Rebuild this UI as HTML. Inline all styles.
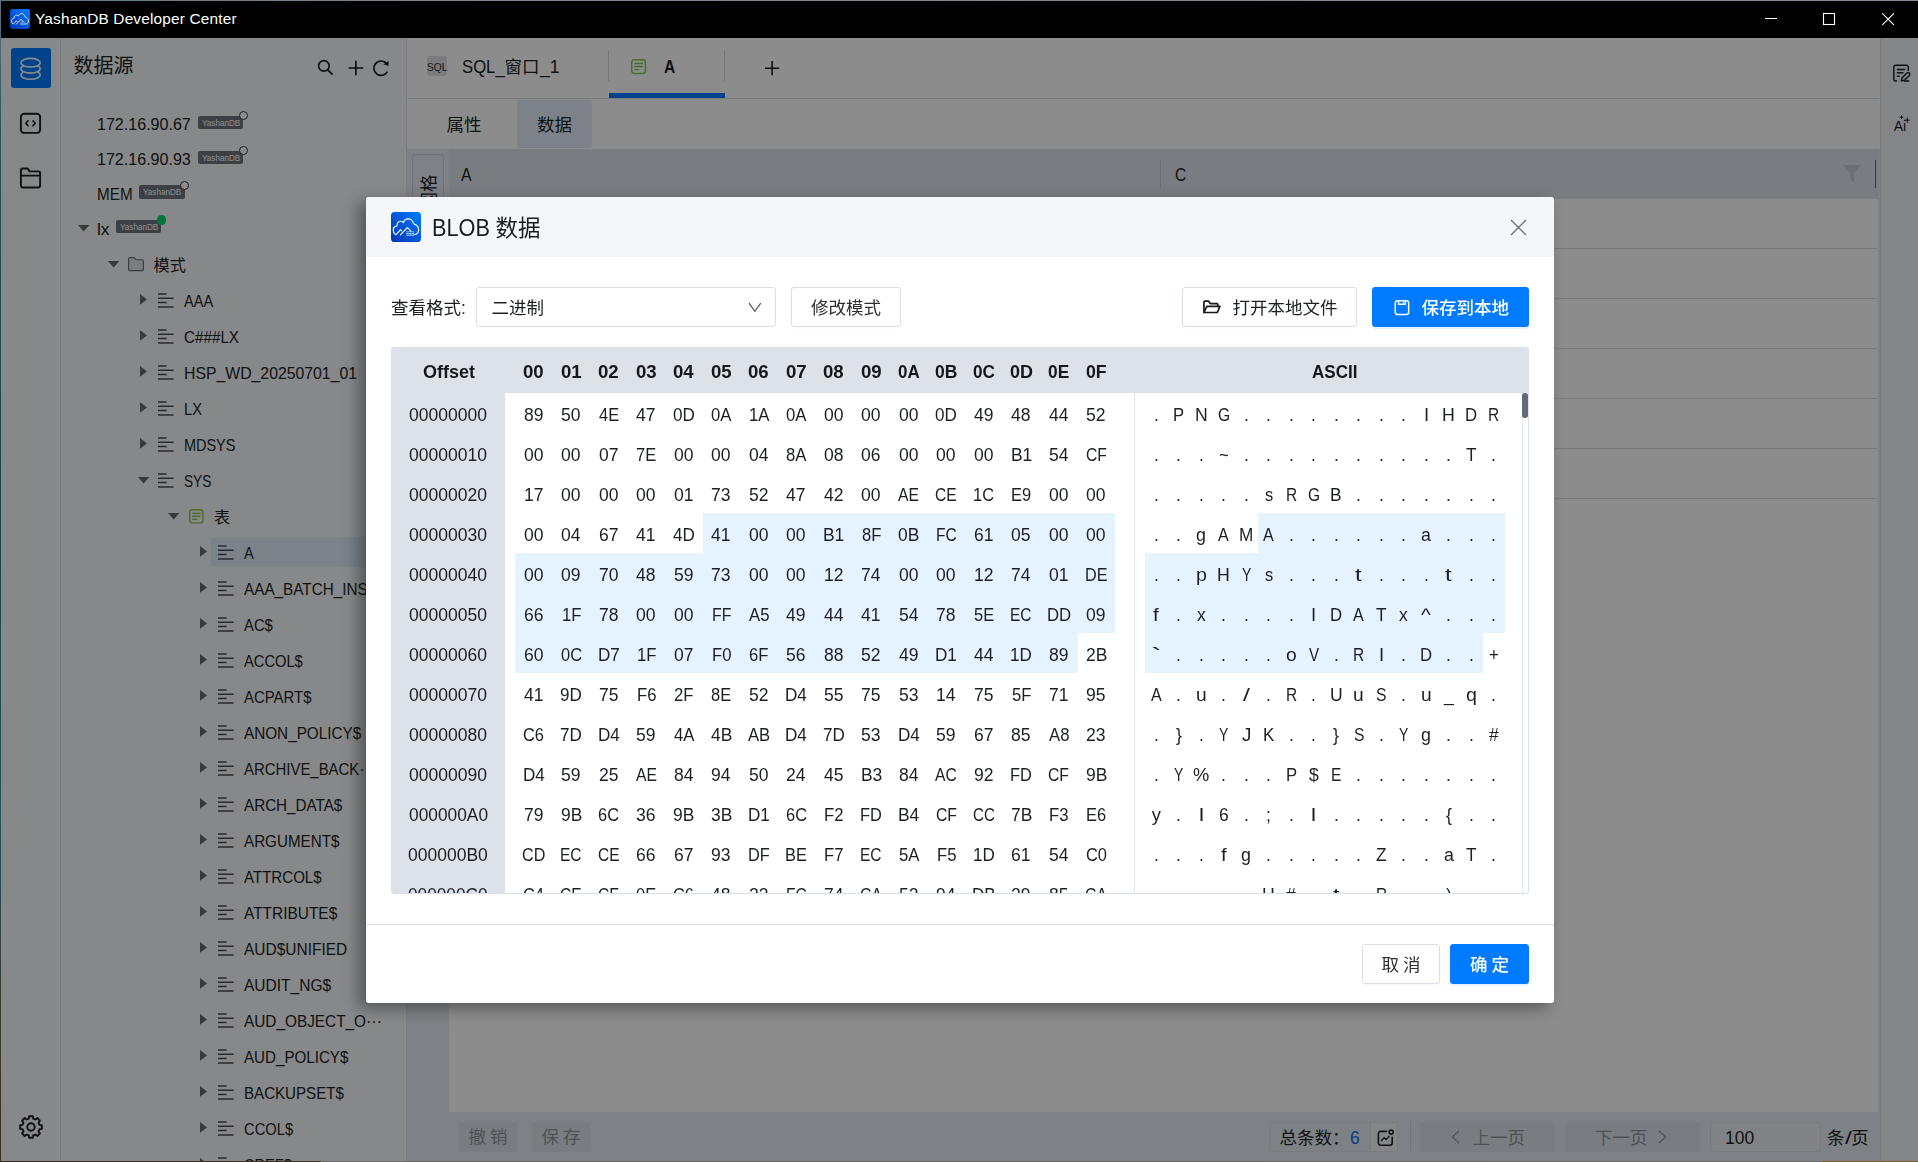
<!DOCTYPE html>
<html lang="zh-CN"><head><meta charset="utf-8"><title>YashanDB Developer Center</title>
<style>
*{box-sizing:border-box;margin:0;padding:0}
html,body{width:1918px;height:1162px;overflow:hidden}
body{position:relative;background:linear-gradient(90deg,#33291f 0,#3d3226 320px,#696969 321px,#6b6b6b 1822px,#78591f 1823px,#7a5a20 100%);font-family:"Liberation Sans","Noto Sans CJK SC",sans-serif;color:#303133;font-size:16px}
.abs{position:absolute}
svg{position:absolute;overflow:visible}
.t{position:absolute;white-space:pre}
.c{text-align:center}
.l{display:inline-block;transform-origin:0 50%}
#topline{left:0;top:0;width:1918px;height:1px;background:linear-gradient(90deg,#5c7483 0,#7b848c 400px,#80868d 100%)}
#leftline{left:0;top:0;width:1px;height:1162px;background:linear-gradient(#5c7483 0,#2a505c 12%,#18434d 45%,#1f5560 70%,#3a3a2c 88%,#3a3020 100%)}
#titlebar{left:1px;top:1px;width:1917px;height:37px;background:#000}
#tb-title{left:35px;top:0.3px;height:37px;line-height:37px;color:#fff;font-size:15.4px;letter-spacing:.18px}
#app{left:1px;top:38px;width:1917px;height:1123px;background:#fff;overflow:hidden}
#mask{left:1px;top:38px;width:1917px;height:1123px;background:rgba(0,0,0,.45)}
/* coordinates inside #app are page coords minus (1,38) -> use inner wrapper shifted */
#appin{position:absolute;left:-1px;top:-38px;width:1918px;height:1162px}
#iconbar{left:1px;top:38px;width:60px;height:1124px;background:#f5f7fa;border-right:1px solid #dfe2e7}
#tree{left:61px;top:38px;width:346px;height:1124px;background:#f5f7fa;border-right:1px solid #dde0e5;overflow:hidden}
#treein{position:absolute;left:-61px;top:-38px;width:600px;height:1162px}
#rightbar{left:1880px;top:38px;width:38px;height:1124px;background:#f0f2f5;border-left:1px solid #d9dce1}
#tabbar{left:407px;top:38px;width:1472px;height:61px;background:#fff;border-bottom:1px solid #dcdee3}
#panel{left:407px;top:149px;width:1473px;height:1013px;background:#e5ecf3}
#thead{left:449px;top:149px;width:1429.5px;height:50px;background:#dce2e9}
#tbody{left:449px;top:199px;width:1428.5px;height:913px;background:#fff}
.rowline{position:absolute;left:449px;width:1428px;height:1px;background:#d9dbdf}
.tr{position:absolute;height:36px;line-height:36px;font-size:16.1px;color:#303133;white-space:nowrap}
.badge{position:absolute;height:13.4px;line-height:15.6px;overflow:hidden;width:45.6px;border-radius:2px;background:#6e757d;color:#fff;font-size:8.3px;text-align:center;white-space:pre}
.dot{position:absolute;width:9px;height:9px;border-radius:50%;border:1.3px solid #3a3d42;background:#fff}
.dot.on{border:none;background:#00d86b;width:9.4px;height:9.4px}
.btn-d{position:absolute;word-spacing:-1px;height:30px;line-height:31.6px;border-radius:3px;text-align:center;font-size:17.5px;color:#90959c;background:#dce3eb}
/* modal */
#modal{will-change:transform;left:366px;top:197px;width:1188px;height:806px;background:#fff;border-radius:3px;box-shadow:-7px 5px 16px rgba(0,0,0,.38);overflow:hidden}
#min{position:absolute;left:-366px;top:-197px;width:1918px;height:1162px}
#mhead{left:366px;top:197px;width:1188px;height:60px;background:#f5f6fa}
#mtitle{left:431.5px;top:197px;height:60px;line-height:60px;font-size:22.5px;color:#1f2329}
.btn{position:absolute;word-spacing:-1px;box-shadow:0 2px 0 rgba(0,0,0,.016);height:40px;line-height:40px;border:1px solid #d9dfe7;border-radius:3px;background:#fff;font-size:17.5px;color:#303133;text-align:center;white-space:nowrap}
.btn.pri{background:#007bff;border-color:#007bff;color:#fff;box-shadow:0 2px 0 rgba(5,125,255,.1)}
#hex{left:391px;top:347px;width:1137.5px;height:546.5px;overflow:hidden;border-bottom:1px solid #d9dfe7;border-right:1px solid #dde2e9;border-radius:3px}
#hexin{position:absolute;left:-391px;top:-347px;width:1918px;height:1162px}
.hh{position:absolute;top:347px;height:46px;line-height:48px;font-weight:bold;font-size:17.6px;color:#1f2329;text-align:center}
.hc{position:absolute;height:40px;line-height:43px;font-size:17.6px;color:#303133;text-align:center}
.sel{position:absolute;background:#e5f2ff}

</style></head>
<body>
<div class="abs" id="leftline"></div>
<div class="abs" id="topline"></div>
<div class="abs" id="titlebar"></div>
<svg style="left:10px;top:9px" width="20" height="20" viewBox="0 0 30 30">
<defs><linearGradient id="lg1" x1="1" y1="0" x2="0" y2="1"><stop offset="0" stop-color="#007cff"/><stop offset="1" stop-color="#0036b4"/></linearGradient></defs>
<rect x="0" y="0" width="30" height="30" rx="3.6" fill="url(#lg1)"/>
<path d="M10.5 18.8 L9.5 17.6 L5.3 22.4 C4.9 22.8 4.5 22.6 4.2 22.400 C3 21.500 2.2 19.9 2.2 17.8 C2.2 15.8 3.8 14.4 6 13.9 C6 11.2 7.6 9.3 9.8 9.3 C10.8 9.3 11.6 9.9 12.2 10.7 C13.2 8.4 15 6.9 17 6.9 C19.8 6.9 22.2 8.9 22.5 11.7 C25.4 12.6 27.7 15 27.7 18 C27.7 20.4 26.2 22 23.6 22.7" fill="none" stroke="#fff" stroke-width="1.25" stroke-linecap="round" stroke-linejoin="round"/>
<path d="M9.3 22.9 L16.5 15.5 L19.9 19.2" fill="none" stroke="#fff" stroke-width="1.25" stroke-linecap="round" stroke-linejoin="round"/>
<path d="M15.2 19.8 H23.2" stroke="#fff" stroke-opacity=".8" stroke-width=".7"/><path d="M15.4 21.6 H23.2" stroke="#fff" stroke-opacity=".75" stroke-width="1.1" stroke-dasharray="2.2 .5"/><path d="M15.2 23.3 H23" stroke="#fff" stroke-opacity=".7" stroke-width=".9"/>
</svg>
<div class="t" id="tb-title">YashanDB Developer Center</div>
<svg style="left:1750px;top:1px" width="168" height="37" viewBox="1750 1 168 37">
<path d="M1765 18.5 H1777" stroke="#fff" stroke-width="1" fill="none"/>
<rect x="1823.5" y="13.5" width="11" height="11" stroke="#fff" stroke-width="1.1" fill="none"/>
<path d="M1882.3 13.3 L1893.9 24.9 M1893.9 13.3 L1882.3 24.9" stroke="#fff" stroke-width="1.15" fill="none"/>
</svg>
<div class="abs" id="app"><div id="appin">
<div class="abs" id="iconbar"></div>
<div class="abs" style="left:11px;top:48px;width:40px;height:40px;border-radius:3px;background:#007bff"></div>
<svg style="left:11px;top:48px" width="40" height="40" viewBox="0 0 40 40" fill="#007bff" stroke="#fff" stroke-width="1.6">
<ellipse cx="19.6" cy="26.9" rx="9.7" ry="4.3"/>
<ellipse cx="19.6" cy="20.8" rx="9.7" ry="4.3"/>
<ellipse cx="19.6" cy="14.7" rx="9.7" ry="4.3"/>
</svg>
<svg style="left:19px;top:112px" width="23" height="23" viewBox="0 0 23 23" fill="none" stroke="#1c1e22" stroke-width="1.9" stroke-linecap="round" stroke-linejoin="round">
<rect x="1.9" y="1.7" width="19.2" height="19.2" rx="3.2"/>
<path d="M9 8.8 L6.8 11.3 L9 13.8 M14 8.8 L16.2 11.3 L14 13.8" stroke-width="1.6"/>
</svg>
<svg style="left:19px;top:166px" width="23" height="24" viewBox="0 0 23 24" fill="none" stroke="#1c1e22" stroke-width="1.9" stroke-linecap="round" stroke-linejoin="round">
<path d="M1.9 7.2 V4.4 C1.9 3.3 2.7 2.5 3.8 2.5 H8.6 L10.6 5.4 H19.2 C20.3 5.4 21.1 6.2 21.1 7.3 V19.6 C21.1 20.700 20.3 21.5 19.2 21.5 H3.8 C2.7 21.5 1.9 20.700 1.9 19.6 Z"/>
<path d="M1.9 9.6 H21.1"/>
</svg>
<svg style="left:17px;top:1113px" width="28" height="28" viewBox="0 0 28 28" fill="none" stroke="#1c1e22" stroke-width="1.9" stroke-linejoin="round">
<path d="M12.12 3.21 L15.88 3.21 L16.18 5.52 L18.45 6.47 L20.30 5.04 L22.96 7.70 L21.53 9.55 L22.48 11.82 L24.79 12.12 L24.79 15.88 L22.48 16.18 L21.53 18.45 L22.96 20.30 L20.30 22.96 L18.45 21.53 L16.18 22.48 L15.88 24.79 L12.12 24.79 L11.82 22.48 L9.55 21.53 L7.70 22.96 L5.04 20.30 L6.47 18.45 L5.52 16.18 L3.21 15.88 L3.21 12.12 L5.52 11.82 L6.47 9.55 L5.04 7.70 L7.70 5.04 L9.55 6.47 L11.82 5.52 Z"/>
<circle cx="14" cy="14" r="3.7"/>
</svg>
<div class="abs" id="tree"><div id="treein">
<div class="t" style="left:73.5px;top:49px;height:34px;line-height:34px;font-size:20px;color:#1c1f24;">数据源</div>
<svg style="left:310px;top:55px" width="90" height="26" viewBox="310 55 90 26" fill="none" stroke="#1c1e22" stroke-width="1.7" stroke-linecap="butt">
<circle cx="323.9" cy="65.9" r="5.3"/><path d="M327.7 69.9 L332.6 74.6" stroke-width="1.9"/>
<path d="M348.6 68 H363.2 M355.9 60.700 V75.3"/>
<path d="M387.4 71.6 A7.2 7.2 0 1 1 386.2 63.2"/>
<path d="M388.6 60.9 L388.3 66.1 L383.4 64.3 Z" fill="#1c1e22" stroke="none"/>
</svg>
<div class="t" style="left:96.5px;top:105.7px;height:36px;line-height:36px;font-size:16.1px;color:#1c1f24;"><span class="l" style="font-size:16.74px;transform:scaleX(0.960);margin-right:-3.91px">172.16.90.67</span></div>
<div class="badge" style="left:197.9px;top:115.80000000000001px"><span class="l" style="font-size:8.63px;transform:scaleX(0.943);margin-right:-2.33px">YashanDB</span></div>
<div class="dot" style="left:239.2px;top:111.30000000000001px"></div>
<div class="t" style="left:96.5px;top:141.39999999999998px;height:36px;line-height:36px;font-size:16.1px;color:#1c1f24;"><span class="l" style="font-size:16.74px;transform:scaleX(0.960);margin-right:-3.91px">172.16.90.93</span></div>
<div class="badge" style="left:197.9px;top:150.6px"><span class="l" style="font-size:8.63px;transform:scaleX(0.943);margin-right:-2.33px">YashanDB</span></div>
<div class="dot" style="left:239.2px;top:146.1px"></div>
<div class="t" style="left:96.5px;top:176.0px;height:36px;line-height:36px;font-size:16.1px;color:#1c1f24;"><span class="l" style="font-size:16.74px;transform:scaleX(0.912);margin-right:-3.42px">MEM</span></div>
<div class="badge" style="left:139px;top:185.20000000000002px"><span class="l" style="font-size:8.63px;transform:scaleX(0.943);margin-right:-2.33px">YashanDB</span></div>
<div class="dot" style="left:180.2px;top:180.70000000000002px"></div>
<div class="t" style="left:96.5px;top:210.6px;height:36px;line-height:36px;font-size:16.1px;color:#1c1f24;"><span class="l" style="font-size:16.74px;transform:scaleX(1.041);margin-right:0.50px">lx</span></div>
<div class="badge" style="left:115.9px;top:219.8px"><span class="l" style="font-size:8.63px;transform:scaleX(0.943);margin-right:-2.33px">YashanDB</span></div>
<div class="dot on" style="left:157px;top:215.3px"></div>
<svg style="left:77.7px;top:224.70000000000002px" width="11.4" height="6.6" viewBox="0 0 11.4 6.6"><path d="M0 0 H11.4 L5.700 6.6 Z" fill="#636971"/></svg>
<svg style="left:107.7px;top:260.8px" width="11.4" height="6.6" viewBox="0 0 11.4 6.6"><path d="M0 0 H11.4 L5.700 6.6 Z" fill="#636971"/></svg>
<svg style="left:128px;top:256.8px" width="16" height="14.2" viewBox="0 0 16 14.2" stroke="#676e76" stroke-width="1.15" fill="#dce3ea" stroke-linejoin="round"><path d="M0.6 2 C0.6 1.2 1.200 0.6 2 0.6 H5.6 C6 0.6 6.300 0.700 6.600 1 L7.8 2.4 C8 2.700 8.300 2.800 8.700 2.800 H14 C14.800 2.800 15.4 3.400 15.4 4.200 V12.2 C15.4 13 14.800 13.6 14 13.6 H2 C1.200 13.6 0.6 13 0.6 12.2 Z"/></svg>
<div class="t" style="left:153.6px;top:246.7px;height:36px;line-height:36px;font-size:16.1px;color:#1c1f24;">模式</div>
<svg style="left:140px;top:294.4px" width="7" height="10.8" viewBox="0 0 7 10.8"><path d="M0 0 L7 5.4 L0 10.8 Z" fill="#636971"/></svg>
<svg style="left:158.2px;top:292.7px" width="16" height="15" viewBox="0 0 16 15" stroke="#4a4e55" stroke-width="1.5" fill="none"><path d="M0 0.9 H8.6 M0 5.3 H15.6 M0 9.6 H8.6 M0 13.9 H15.6"/></svg>
<div class="t" style="left:183.9px;top:282.7px;height:36px;line-height:36px;font-size:16.1px;color:#1c1f24;"><span class="l" style="font-size:16.74px;transform:scaleX(0.870);margin-right:-4.36px">AAA</span></div>
<svg style="left:140px;top:330.4px" width="7" height="10.8" viewBox="0 0 7 10.8"><path d="M0 0 L7 5.4 L0 10.8 Z" fill="#636971"/></svg>
<svg style="left:158.2px;top:328.7px" width="16" height="15" viewBox="0 0 16 15" stroke="#4a4e55" stroke-width="1.5" fill="none"><path d="M0 0.9 H8.6 M0 5.3 H15.6 M0 9.6 H8.6 M0 13.9 H15.6"/></svg>
<div class="t" style="left:183.9px;top:318.7px;height:36px;line-height:36px;font-size:16.1px;color:#1c1f24;"><span class="l" style="font-size:16.74px;transform:scaleX(0.910);margin-right:-5.45px">C###LX</span></div>
<svg style="left:140px;top:366.4px" width="7" height="10.8" viewBox="0 0 7 10.8"><path d="M0 0 L7 5.4 L0 10.8 Z" fill="#636971"/></svg>
<svg style="left:158.2px;top:364.7px" width="16" height="15" viewBox="0 0 16 15" stroke="#4a4e55" stroke-width="1.5" fill="none"><path d="M0 0.9 H8.6 M0 5.3 H15.6 M0 9.6 H8.6 M0 13.9 H15.6"/></svg>
<div class="t" style="left:183.9px;top:354.7px;height:36px;line-height:36px;font-size:16.1px;color:#1c1f24;"><span class="l" style="font-size:16.74px;transform:scaleX(0.944);margin-right:-10.27px">HSP_WD_20250701_01</span></div>
<svg style="left:140px;top:402.4px" width="7" height="10.8" viewBox="0 0 7 10.8"><path d="M0 0 L7 5.4 L0 10.8 Z" fill="#636971"/></svg>
<svg style="left:158.2px;top:400.7px" width="16" height="15" viewBox="0 0 16 15" stroke="#4a4e55" stroke-width="1.5" fill="none"><path d="M0 0.9 H8.6 M0 5.3 H15.6 M0 9.6 H8.6 M0 13.9 H15.6"/></svg>
<div class="t" style="left:183.9px;top:390.7px;height:36px;line-height:36px;font-size:16.1px;color:#1c1f24;"><span class="l" style="font-size:16.74px;transform:scaleX(0.878);margin-right:-2.50px">LX</span></div>
<svg style="left:140px;top:438.4px" width="7" height="10.8" viewBox="0 0 7 10.8"><path d="M0 0 L7 5.4 L0 10.8 Z" fill="#636971"/></svg>
<svg style="left:158.2px;top:436.7px" width="16" height="15" viewBox="0 0 16 15" stroke="#4a4e55" stroke-width="1.5" fill="none"><path d="M0 0.9 H8.6 M0 5.3 H15.6 M0 9.6 H8.6 M0 13.9 H15.6"/></svg>
<div class="t" style="left:183.9px;top:426.7px;height:36px;line-height:36px;font-size:16.1px;color:#1c1f24;"><span class="l" style="font-size:16.74px;transform:scaleX(0.863);margin-right:-8.17px">MDSYS</span></div>
<svg style="left:137.7px;top:476.8px" width="11.4" height="6.6" viewBox="0 0 11.4 6.6"><path d="M0 0 H11.4 L5.700 6.6 Z" fill="#636971"/></svg>
<svg style="left:158.2px;top:472.7px" width="16" height="15" viewBox="0 0 16 15" stroke="#4a4e55" stroke-width="1.5" fill="none"><path d="M0 0.9 H8.6 M0 5.3 H15.6 M0 9.6 H8.6 M0 13.9 H15.6"/></svg>
<div class="t" style="left:183.9px;top:462.7px;height:36px;line-height:36px;font-size:16.1px;color:#1c1f24;"><span class="l" style="font-size:16.74px;transform:scaleX(0.812);margin-right:-6.30px">SYS</span></div>
<svg style="left:167.7px;top:512.8px" width="11.4" height="6.6" viewBox="0 0 11.4 6.6"><path d="M0 0 H11.4 L5.700 6.6 Z" fill="#636971"/></svg>
<svg style="left:188.7px;top:508.7px" width="14.6" height="14.6" viewBox="0 0 14.6 14.6" stroke="#8cc152" stroke-width="1.4" fill="none" stroke-linecap="round"><rect x="0.700" y="0.700" width="13.2" height="13.2" rx="2.6"/><path d="M3.7 4.4 H10.9 M3.7 7.3 H10.9 M3.7 10.2 H7.6"/></svg>
<div class="t" style="left:213.9px;top:498.7px;height:36px;line-height:36px;font-size:16.1px;color:#1c1f24;">表</div>
<div class="abs" style="left:211px;top:537px;width:200px;height:30px;border-radius:4px 0 0 4px;background:#e1edfb"></div>
<svg style="left:200px;top:546.4px" width="7" height="10.8" viewBox="0 0 7 10.8"><path d="M0 0 L7 5.4 L0 10.8 Z" fill="#636971"/></svg>
<svg style="left:218.2px;top:544.7px" width="16" height="15" viewBox="0 0 16 15" stroke="#4a4e55" stroke-width="1.5" fill="none"><path d="M0 0.9 H8.6 M0 5.3 H15.6 M0 9.6 H8.6 M0 13.9 H15.6"/></svg>
<div class="t" style="left:243.9px;top:534.7px;height:36px;line-height:36px;font-size:16.1px;color:#1c1f24;"><span class="l" style="font-size:16.74px;transform:scaleX(0.877);margin-right:-1.38px">A</span></div>
<svg style="left:200px;top:582.4px" width="7" height="10.8" viewBox="0 0 7 10.8"><path d="M0 0 L7 5.4 L0 10.8 Z" fill="#636971"/></svg>
<svg style="left:218.2px;top:580.7px" width="16" height="15" viewBox="0 0 16 15" stroke="#4a4e55" stroke-width="1.5" fill="none"><path d="M0 0.9 H8.6 M0 5.3 H15.6 M0 9.6 H8.6 M0 13.9 H15.6"/></svg>
<div class="t" style="left:243.9px;top:570.7px;height:36px;line-height:36px;font-size:16.1px;color:#1c1f24;"><span class="l" style="font-size:16.74px;transform:scaleX(0.913);margin-right:-11.83px">AAA_BATCH_INS</span>···</div>
<svg style="left:200px;top:618.4px" width="7" height="10.8" viewBox="0 0 7 10.8"><path d="M0 0 L7 5.4 L0 10.8 Z" fill="#636971"/></svg>
<svg style="left:218.2px;top:616.7px" width="16" height="15" viewBox="0 0 16 15" stroke="#4a4e55" stroke-width="1.5" fill="none"><path d="M0 0.9 H8.6 M0 5.3 H15.6 M0 9.6 H8.6 M0 13.9 H15.6"/></svg>
<div class="t" style="left:243.9px;top:606.7px;height:36px;line-height:36px;font-size:16.1px;color:#1c1f24;"><span class="l" style="font-size:16.74px;transform:scaleX(0.885);margin-right:-3.75px">AC$</span></div>
<svg style="left:200px;top:654.4px" width="7" height="10.8" viewBox="0 0 7 10.8"><path d="M0 0 L7 5.4 L0 10.8 Z" fill="#636971"/></svg>
<svg style="left:218.2px;top:652.7px" width="16" height="15" viewBox="0 0 16 15" stroke="#4a4e55" stroke-width="1.5" fill="none"><path d="M0 0.9 H8.6 M0 5.3 H15.6 M0 9.6 H8.6 M0 13.9 H15.6"/></svg>
<div class="t" style="left:243.9px;top:642.7px;height:36px;line-height:36px;font-size:16.1px;color:#1c1f24;"><span class="l" style="font-size:16.74px;transform:scaleX(0.877);margin-right:-8.23px">ACCOL$</span></div>
<svg style="left:200px;top:690.4px" width="7" height="10.8" viewBox="0 0 7 10.8"><path d="M0 0 L7 5.4 L0 10.8 Z" fill="#636971"/></svg>
<svg style="left:218.2px;top:688.7px" width="16" height="15" viewBox="0 0 16 15" stroke="#4a4e55" stroke-width="1.5" fill="none"><path d="M0 0.9 H8.6 M0 5.3 H15.6 M0 9.6 H8.6 M0 13.9 H15.6"/></svg>
<div class="t" style="left:243.9px;top:678.7px;height:36px;line-height:36px;font-size:16.1px;color:#1c1f24;"><span class="l" style="font-size:16.74px;transform:scaleX(0.892);margin-right:-8.14px">ACPART$</span></div>
<svg style="left:200px;top:726.4px" width="7" height="10.8" viewBox="0 0 7 10.8"><path d="M0 0 L7 5.4 L0 10.8 Z" fill="#636971"/></svg>
<svg style="left:218.2px;top:724.7px" width="16" height="15" viewBox="0 0 16 15" stroke="#4a4e55" stroke-width="1.5" fill="none"><path d="M0 0.9 H8.6 M0 5.3 H15.6 M0 9.6 H8.6 M0 13.9 H15.6"/></svg>
<div class="t" style="left:243.9px;top:714.7px;height:36px;line-height:36px;font-size:16.1px;color:#1c1f24;"><span class="l" style="font-size:16.74px;transform:scaleX(0.913);margin-right:-11.14px">ANON_POLICY$</span></div>
<svg style="left:200px;top:762.4px" width="7" height="10.8" viewBox="0 0 7 10.8"><path d="M0 0 L7 5.4 L0 10.8 Z" fill="#636971"/></svg>
<svg style="left:218.2px;top:760.7px" width="16" height="15" viewBox="0 0 16 15" stroke="#4a4e55" stroke-width="1.5" fill="none"><path d="M0 0.9 H8.6 M0 5.3 H15.6 M0 9.6 H8.6 M0 13.9 H15.6"/></svg>
<div class="t" style="left:243.9px;top:750.7px;height:36px;line-height:36px;font-size:16.1px;color:#1c1f24;"><span class="l" style="font-size:16.74px;transform:scaleX(0.892);margin-right:-14.00px">ARCHIVE_BACK</span>···</div>
<svg style="left:200px;top:798.4px" width="7" height="10.8" viewBox="0 0 7 10.8"><path d="M0 0 L7 5.4 L0 10.8 Z" fill="#636971"/></svg>
<svg style="left:218.2px;top:796.7px" width="16" height="15" viewBox="0 0 16 15" stroke="#4a4e55" stroke-width="1.5" fill="none"><path d="M0 0.9 H8.6 M0 5.3 H15.6 M0 9.6 H8.6 M0 13.9 H15.6"/></svg>
<div class="t" style="left:243.9px;top:786.7px;height:36px;line-height:36px;font-size:16.1px;color:#1c1f24;"><span class="l" style="font-size:16.74px;transform:scaleX(0.909);margin-right:-9.86px">ARCH_DATA$</span></div>
<svg style="left:200px;top:834.4px" width="7" height="10.8" viewBox="0 0 7 10.8"><path d="M0 0 L7 5.4 L0 10.8 Z" fill="#636971"/></svg>
<svg style="left:218.2px;top:832.7px" width="16" height="15" viewBox="0 0 16 15" stroke="#4a4e55" stroke-width="1.5" fill="none"><path d="M0 0.9 H8.6 M0 5.3 H15.6 M0 9.6 H8.6 M0 13.9 H15.6"/></svg>
<div class="t" style="left:243.9px;top:822.7px;height:36px;line-height:36px;font-size:16.1px;color:#1c1f24;"><span class="l" style="font-size:16.74px;transform:scaleX(0.908);margin-right:-9.62px">ARGUMENT$</span></div>
<svg style="left:200px;top:870.4px" width="7" height="10.8" viewBox="0 0 7 10.8"><path d="M0 0 L7 5.4 L0 10.8 Z" fill="#636971"/></svg>
<svg style="left:218.2px;top:868.7px" width="16" height="15" viewBox="0 0 16 15" stroke="#4a4e55" stroke-width="1.5" fill="none"><path d="M0 0.9 H8.6 M0 5.3 H15.6 M0 9.6 H8.6 M0 13.9 H15.6"/></svg>
<div class="t" style="left:243.9px;top:858.7px;height:36px;line-height:36px;font-size:16.1px;color:#1c1f24;"><span class="l" style="font-size:16.74px;transform:scaleX(0.901);margin-right:-8.50px">ATTRCOL$</span></div>
<svg style="left:200px;top:906.4px" width="7" height="10.8" viewBox="0 0 7 10.8"><path d="M0 0 L7 5.4 L0 10.8 Z" fill="#636971"/></svg>
<svg style="left:218.2px;top:904.7px" width="16" height="15" viewBox="0 0 16 15" stroke="#4a4e55" stroke-width="1.5" fill="none"><path d="M0 0.9 H8.6 M0 5.3 H15.6 M0 9.6 H8.6 M0 13.9 H15.6"/></svg>
<div class="t" style="left:243.9px;top:894.7px;height:36px;line-height:36px;font-size:16.1px;color:#1c1f24;"><span class="l" style="font-size:16.74px;transform:scaleX(0.923);margin-right:-7.80px">ATTRIBUTE$</span></div>
<svg style="left:200px;top:942.4px" width="7" height="10.8" viewBox="0 0 7 10.8"><path d="M0 0 L7 5.4 L0 10.8 Z" fill="#636971"/></svg>
<svg style="left:218.2px;top:940.7px" width="16" height="15" viewBox="0 0 16 15" stroke="#4a4e55" stroke-width="1.5" fill="none"><path d="M0 0.9 H8.6 M0 5.3 H15.6 M0 9.6 H8.6 M0 13.9 H15.6"/></svg>
<div class="t" style="left:243.9px;top:930.7px;height:36px;line-height:36px;font-size:16.1px;color:#1c1f24;"><span class="l" style="font-size:16.74px;transform:scaleX(0.925);margin-right:-8.34px">AUD$UNIFIED</span></div>
<svg style="left:200px;top:978.4px" width="7" height="10.8" viewBox="0 0 7 10.8"><path d="M0 0 L7 5.4 L0 10.8 Z" fill="#636971"/></svg>
<svg style="left:218.2px;top:976.7px" width="16" height="15" viewBox="0 0 16 15" stroke="#4a4e55" stroke-width="1.5" fill="none"><path d="M0 0.9 H8.6 M0 5.3 H15.6 M0 9.6 H8.6 M0 13.9 H15.6"/></svg>
<div class="t" style="left:243.9px;top:966.7px;height:36px;line-height:36px;font-size:16.1px;color:#1c1f24;"><span class="l" style="font-size:16.74px;transform:scaleX(0.928);margin-right:-6.72px">AUDIT_NG$</span></div>
<svg style="left:200px;top:1014.4px" width="7" height="10.8" viewBox="0 0 7 10.8"><path d="M0 0 L7 5.4 L0 10.8 Z" fill="#636971"/></svg>
<svg style="left:218.2px;top:1012.7px" width="16" height="15" viewBox="0 0 16 15" stroke="#4a4e55" stroke-width="1.5" fill="none"><path d="M0 0.9 H8.6 M0 5.3 H15.6 M0 9.6 H8.6 M0 13.9 H15.6"/></svg>
<div class="t" style="left:243.9px;top:1002.7px;height:36px;line-height:36px;font-size:16.1px;color:#1c1f24;"><span class="l" style="font-size:16.74px;transform:scaleX(0.918);margin-right:-10.95px">AUD_OBJECT_O</span>···</div>
<svg style="left:200px;top:1050.4px" width="7" height="10.8" viewBox="0 0 7 10.8"><path d="M0 0 L7 5.4 L0 10.8 Z" fill="#636971"/></svg>
<svg style="left:218.2px;top:1048.7px" width="16" height="15" viewBox="0 0 16 15" stroke="#4a4e55" stroke-width="1.5" fill="none"><path d="M0 0.9 H8.6 M0 5.3 H15.6 M0 9.6 H8.6 M0 13.9 H15.6"/></svg>
<div class="t" style="left:243.9px;top:1038.7px;height:36px;line-height:36px;font-size:16.1px;color:#1c1f24;"><span class="l" style="font-size:16.74px;transform:scaleX(0.905);margin-right:-10.94px">AUD_POLICY$</span></div>
<svg style="left:200px;top:1086.4px" width="7" height="10.8" viewBox="0 0 7 10.8"><path d="M0 0 L7 5.4 L0 10.8 Z" fill="#636971"/></svg>
<svg style="left:218.2px;top:1084.7px" width="16" height="15" viewBox="0 0 16 15" stroke="#4a4e55" stroke-width="1.5" fill="none"><path d="M0 0.9 H8.6 M0 5.3 H15.6 M0 9.6 H8.6 M0 13.9 H15.6"/></svg>
<div class="t" style="left:243.9px;top:1074.7px;height:36px;line-height:36px;font-size:16.1px;color:#1c1f24;"><span class="l" style="font-size:16.74px;transform:scaleX(0.902);margin-right:-10.80px">BACKUPSET$</span></div>
<svg style="left:200px;top:1122.4px" width="7" height="10.8" viewBox="0 0 7 10.8"><path d="M0 0 L7 5.4 L0 10.8 Z" fill="#636971"/></svg>
<svg style="left:218.2px;top:1120.7px" width="16" height="15" viewBox="0 0 16 15" stroke="#4a4e55" stroke-width="1.5" fill="none"><path d="M0 0.9 H8.6 M0 5.3 H15.6 M0 9.6 H8.6 M0 13.9 H15.6"/></svg>
<div class="t" style="left:243.9px;top:1110.7px;height:36px;line-height:36px;font-size:16.1px;color:#1c1f24;"><span class="l" style="font-size:16.74px;transform:scaleX(0.880);margin-right:-6.69px">CCOL$</span></div>
<svg style="left:200px;top:1158.4px" width="7" height="10.8" viewBox="0 0 7 10.8"><path d="M0 0 L7 5.4 L0 10.8 Z" fill="#636971"/></svg>
<svg style="left:218.2px;top:1156.7px" width="16" height="15" viewBox="0 0 16 15" stroke="#4a4e55" stroke-width="1.5" fill="none"><path d="M0 0.9 H8.6 M0 5.3 H15.6 M0 9.6 H8.6 M0 13.9 H15.6"/></svg>
<div class="t" style="left:243.9px;top:1146.7px;height:36px;line-height:36px;font-size:16.1px;color:#1c1f24;"><span class="l" style="font-size:16.74px;transform:scaleX(0.871);margin-right:-7.08px">CREF$</span></div>
</div></div>
<div class="abs" id="tabbar"></div>
<div class="abs" style="left:427px;top:56px;width:20px;height:20px;border-radius:3px;background:#e0e1e3"></div>
<div class="t c" style="left:427.2px;top:56.8px;width:20px;height:20px;line-height:20px;font-size:10.8px;color:#2c2f33;"><span class="l" style="font-size:11.23px;transform:scaleX(0.905);margin-right:-2.14px">SQL</span></div>
<div class="t" style="left:461.8px;top:49px;height:36px;line-height:36px;font-size:17.5px;color:#1c1f24;"><span class="l" style="font-size:18.2px;transform:scaleX(0.918);margin-right:-3.81px">SQL_</span>窗口<span class="l" style="font-size:18.2px;transform:scaleX(0.964);margin-right:-0.73px">_1</span></div>
<div class="abs" style="left:608px;top:51px;width:1px;height:30px;background:#d5d7dc"></div>
<div class="abs" style="left:724px;top:51px;width:1px;height:30px;background:#d5d7dc"></div>
<div class="abs" style="left:609px;top:93.3px;width:116px;height:4.8px;background:#007bff"></div>
<svg style="left:631.3px;top:58.8px" width="15.2" height="15.2" viewBox="0 0 14.6 14.6" stroke="#8cc152" stroke-width="1.4" fill="none" stroke-linecap="round"><rect x="0.700" y="0.700" width="13.2" height="13.2" rx="2.6"/><path d="M3.7 4.4 H10.9 M3.7 7.3 H10.9 M3.7 10.2 H7.6"/></svg>
<div class="t" style="left:664px;top:49px;height:36px;line-height:36px;font-size:17.5px;color:#1c1f24;font-weight:bold;"><span class="l" style="font-size:18.2px;transform:scaleX(0.854);margin-right:-1.92px">A</span></div>
<svg style="left:764px;top:60px" width="16" height="16" viewBox="0 0 16 16" stroke="#1c1e22" stroke-width="1.6" fill="none"><path d="M1 8.2 H15.2 M8.1 1 V15.3"/></svg>
<div class="abs" style="left:517px;top:100px;width:75px;height:48px;border-radius:3px;background:#e3edf9"></div>
<div class="t" style="left:446.5px;top:101px;height:48px;line-height:48px;font-size:17.5px;color:#1c1f24;">属性</div>
<div class="t" style="left:537px;top:101px;height:48px;line-height:48px;font-size:17.5px;color:#1c1f24;">数据</div>
<div class="abs" id="panel"></div>
<div class="abs" style="left:412px;top:154px;width:31.5px;height:90px;border:1px solid #cdd2d9;border-radius:3px;background:#e5ecf3"></div>
<div class="t" style="left:411.1px;top:181.700px;width:35px;height:20px;font-size:17.5px;line-height:20px;transform:rotate(-90deg);color:#23262b">网格</div>
<div class="abs" id="thead"></div>
<div class="abs" id="tbody"></div>
<div class="rowline" style="top:248px"></div>
<div class="rowline" style="top:298px"></div>
<div class="rowline" style="top:348px"></div>
<div class="rowline" style="top:398px"></div>
<div class="rowline" style="top:448px"></div>
<div class="rowline" style="top:498px"></div>
<div class="t" style="left:460.5px;top:156.8px;height:36px;line-height:36px;font-size:17.5px;color:#1c1f24;"><span class="l" style="font-size:18.2px;transform:scaleX(0.876);margin-right:-1.50px">A</span></div>
<div class="t" style="left:1175px;top:156.8px;height:36px;line-height:36px;font-size:17.5px;color:#1c1f24;"><span class="l" style="font-size:18.2px;transform:scaleX(0.850);margin-right:-1.97px">C</span></div>
<div class="abs" style="left:1160px;top:160px;width:1px;height:28px;background:#c3c9d1"></div>
<div class="abs" style="left:1875px;top:160px;width:1px;height:28px;background:#5f656e"></div>
<svg style="left:1842.5px;top:165px" width="18" height="17.5" viewBox="0 0 18 17.5"><path d="M0 0 H18 L11 8.3 V17.5 L7.2 14.2 V8.3 Z" fill="#c4c9d1"/></svg>
<div class="btn-d" style="left:459px;top:1122px;width:58px">撤 销</div>
<div class="btn-d" style="left:532px;top:1122px;width:58px">保 存</div>
<div class="abs" style="left:1268.5px;top:1122px;width:129.5px;height:29.5px;border:1px solid #dde1e7;border-radius:3px;background:#e5ecf3"></div>
<div class="abs" style="left:1369.5px;top:1123px;width:27.5px;height:27.500px;border-left:1px solid #dde1e7;background:#f3f5f8;border-radius:0 3px 3px 0"></div>
<div class="t" style="left:1279.5px;top:1122.8px;height:30px;line-height:30px;font-size:17.5px;color:#1c1f24;">总条数：</div>
<div class="t" style="left:1349.5px;top:1122.8px;height:30px;line-height:30px;font-size:17.5px;color:#0a6fe8;"><span class="l" style="font-size:18.2px;transform:scaleX(0.960);margin-right:-0.41px">6</span></div>
<svg style="left:1377px;top:1129px" width="17.5" height="17.5" viewBox="0 0 17.5 17.5" fill="none" stroke="#1c1e22" stroke-width="1.6" stroke-linecap="round" stroke-linejoin="round">
<path d="M9.6 2.4 H3.6 C2.3 2.4 1.4 3.3 1.4 4.6 V14 C1.4 15.3 2.3 16.2 3.6 16.2 H13 C14.3 16.2 15.2 15.3 15.2 14 V8.4"/>
<circle cx="14.2" cy="3.1" r="2"/><path d="M4.4 11.6 L7.2 8.8 L9.2 10.6 L12 7.4" stroke-width="1.4"/></svg>
<div class="abs" style="left:1409.5px;top:1121px;width:1px;height:30px;background:#cfd4db"></div>
<div class="btn-d" style="left:1420px;top:1122px;width:135px"></div>
<div class="btn-d" style="left:1565px;top:1122px;width:135px"></div>
<div class="t" style="left:1472.5px;top:1122.8px;height:30px;line-height:30px;font-size:17.5px;color:#90959c;">上一页</div>
<div class="t" style="left:1595px;top:1122.8px;height:30px;line-height:30px;font-size:17.5px;color:#90959c;">下一页</div>
<svg style="left:1450px;top:1128px" width="12" height="18" viewBox="0 0 12 18" fill="none" stroke="#90959c" stroke-width="1.3"><path d="M9.2 2.6 L2.6 9 L9.2 15.4"/></svg>
<svg style="left:1656px;top:1128px" width="12" height="18" viewBox="0 0 12 18" fill="none" stroke="#90959c" stroke-width="1.3"><path d="M2.8 2.6 L9.4 9 L2.8 15.4"/></svg>
<div class="abs" style="left:1710px;top:1122px;width:111px;height:29.5px;border:1px solid #dadfe6;border-radius:3px;background:#e9edf2"></div>
<div class="t" style="left:1725px;top:1122.8px;height:30px;line-height:30px;font-size:17.5px;color:#1c1f24;"><span class="l" style="font-size:18.2px;transform:scaleX(0.960);margin-right:-1.22px">100</span></div>
<div class="t" style="left:1827px;top:1122.8px;height:30px;line-height:30px;font-size:17.5px;color:#1c1f24;">条<span class="l" style="font-size:18.2px;transform:scaleX(1.358);margin-right:1.81px">/</span>页</div>
<div class="abs" id="rightbar"></div>
<svg style="left:1892px;top:63px" width="20" height="20" viewBox="0 0 20 20" fill="none" stroke="#1c1e22" stroke-width="1.45" stroke-linecap="round" stroke-linejoin="round">
<path d="M4.6 18 H3.8 C2.6 18 1.8 17.2 1.8 16 V4.2 C1.8 3 2.6 2.2 3.8 2.2 H14.2 C15.4 2.2 16.2 3 16.2 4.2 V7.2"/>
<path d="M5.4 6.4 H12.6 M5.4 9.8 H11 M5.4 13.2 H7.2"/>
<path d="M9.4 17.9 L10 14.9 L14.9 10 C15.6 9.3 16.6 9.3 17.3 10 C18 10.700 18 11.7 17.3 12.4 L12.400 17.300 Z M12.4 17.9 H16.8"/></svg>
<div class="t" style="left:1893.7px;top:115.7px;height:20px;line-height:20px;font-size:14px;color:#1c1e22">Ai</div>
<svg style="left:1898px;top:114px" width="14" height="10" viewBox="1898 114 14 10" fill="none" stroke="#1c1e22" stroke-width="1" stroke-linecap="round">
<path d="M1901.5 115.8 V118.6 M1900.1 117.2 H1902.9 M1907.2 118 V122.4 M1905 120.2 H1909.4"/></svg>
</div></div>
<div class="abs" id="mask"></div>
<div class="abs" id="modal"><div id="min">
<div class="abs" id="mhead"></div>
<svg style="left:391px;top:212px" width="30" height="30" viewBox="0 0 30 30">
<defs><linearGradient id="lg2" x1="1" y1="0" x2="0" y2="1"><stop offset="0" stop-color="#007cff"/><stop offset="1" stop-color="#0036b4"/></linearGradient></defs>
<rect x="0" y="0" width="30" height="30" rx="3.6" fill="url(#lg2)"/>
<path d="M10.5 18.8 L9.5 17.6 L5.3 22.4 C4.9 22.8 4.5 22.6 4.2 22.400 C3 21.500 2.2 19.9 2.2 17.8 C2.2 15.8 3.8 14.4 6 13.9 C6 11.2 7.6 9.3 9.8 9.3 C10.8 9.3 11.6 9.9 12.2 10.7 C13.2 8.4 15 6.9 17 6.9 C19.8 6.9 22.2 8.9 22.5 11.7 C25.4 12.6 27.7 15 27.7 18 C27.7 20.4 26.2 22 23.6 22.7" fill="none" stroke="#fff" stroke-width="1.1" stroke-linecap="round" stroke-linejoin="round"/>
<path d="M9.3 22.9 L16.5 15.5 L19.9 19.2" fill="none" stroke="#fff" stroke-width="1.1" stroke-linecap="round" stroke-linejoin="round"/>
<path d="M15.2 19.8 H23.2" stroke="#fff" stroke-opacity=".8" stroke-width=".7"/><path d="M15.4 21.6 H23.2" stroke="#fff" stroke-opacity=".75" stroke-width="1.1" stroke-dasharray="2.2 .5"/><path d="M15.2 23.3 H23" stroke="#fff" stroke-opacity=".7" stroke-width=".9"/>
</svg>
<div class="t" style="left:431.5px;top:198.2px;height:60px;line-height:60px;font-size:22.5px;color:#1a1c20;"><span class="l" style="font-size:23.4px;transform:scaleX(0.927);margin-right:-4.58px">BLOB</span> 数据</div>
<svg style="left:1510px;top:219px" width="17" height="17" viewBox="0 0 17 17" fill="none" stroke="#6f7378" stroke-width="1.35"><path d="M1 1 L16 16 M16 1 L1 16"/></svg>
<div class="t" style="left:391px;top:288px;height:40px;line-height:40px;font-size:17.5px;color:#1c1f24;">查看格式<span class="l" style="font-size:18.2px;transform:scaleX(0.963);margin-right:-0.19px">:</span></div>
<div class="abs" style="left:476px;top:287px;width:300px;height:40px;border:1px solid #d9dfe7;border-radius:3px;background:#fff"></div>
<div class="t" style="left:491.5px;top:288px;height:40px;line-height:40px;font-size:17.5px;color:#1c1f24;">二进制</div>
<svg style="left:746px;top:300px" width="18" height="14" viewBox="0 0 18 14" fill="none" stroke="#4a4f57" stroke-width="1.15"><path d="M3 3.1 L8.9 11.3 L14.8 3.1"/></svg>
<div class="btn" style="left:791px;top:287px;width:110px">修改模式</div>
<div class="btn" style="left:1182px;top:287px;width:174.5px"></div>
<div class="t" style="left:1232.5px;top:288px;height:40px;line-height:40px;font-size:17.5px;color:#1c1f24;">打开本地文件</div>
<svg style="left:1202px;top:298px" width="20" height="17" viewBox="0 0 20 17" fill="none" stroke="#17191c" stroke-width="1.7" stroke-linejoin="round" stroke-linecap="round">
<path d="M1.95 14.5 V4.1 C1.95 3.500 2.400 3.150 2.900 3.150 H6.400 L8.5 5.6 H14.9 C15.5 5.6 15.8 5.900 15.8 6.500 V8.3"/>
<path d="M1.95 14.5 L4.8 8.3 H17.9 L15.3 14.5 Z"/></svg>
<div class="btn pri" style="left:1372px;top:287px;width:156.5px"></div>
<div class="t" style="left:1421.5px;top:288px;height:40px;line-height:40px;font-size:17.5px;color:#fff;font-weight:500;">保存到本地</div>
<svg style="left:1393px;top:298.5px" width="17" height="17" viewBox="0 0 17 17" fill="none" stroke="#fff" stroke-width="1.5" stroke-linejoin="round" stroke-linecap="round">
<rect x="2.25" y="1.75" width="13.4" height="13.7" rx="2.2"/><path d="M5.5 2 V5.25 H12.3 V2"/><circle cx="10.5" cy="3.800" r=".7" fill="#fff" stroke="none"/></svg>
<div class="abs" id="hex"><div id="hexin">
<div class="abs" style="left:391px;top:347px;width:1137.5px;height:46px;background:#dde1e8"></div>
<div class="abs" style="left:391px;top:393px;width:114px;height:520px;background:#dde1e8"></div>
<div class="abs" style="left:1134px;top:393px;width:1px;height:520px;background:#dfe3ea"></div>
<div class="abs" style="left:1521.5px;top:393px;width:1px;height:520px;background:#e4e7ec"></div>
<div class="abs" style="left:1522.3px;top:393px;width:5.4px;height:24.500px;border-radius:2.7px;background:#626a76"></div>
<div class="sel" style="left:702.5px;top:513px;width:412.5px;height:40px"></div>
<div class="sel" style="left:515.0px;top:553px;width:600.0px;height:80px"></div>
<div class="sel" style="left:515.0px;top:633px;width:562.5px;height:40px"></div>
<div class="sel" style="left:1257.5px;top:513px;width:247.5px;height:40px"></div>
<div class="sel" style="left:1145.0px;top:553px;width:360.0px;height:80px"></div>
<div class="sel" style="left:1145.0px;top:633px;width:337.5px;height:40px"></div>
<div class="t c" style="left:391.6px;top:348.5px;width:114px;height:46px;line-height:46px;font-size:17.6px;color:#15171a;font-weight:bold;"><span class="l" style="font-size:18.3px;transform:scaleX(0.987);margin-right:-0.67px">Offset</span></div>
<div class="t c" style="left:515.0px;top:348.5px;width:37.5px;height:46px;line-height:46px;font-size:17.6px;color:#15171a;font-weight:bold;"><span class="l" style="font-size:18.3px;transform:scaleX(1.020);margin-right:0.41px">00</span></div>
<div class="t c" style="left:552.5px;top:348.5px;width:37.5px;height:46px;line-height:46px;font-size:17.6px;color:#15171a;font-weight:bold;"><span class="l" style="font-size:18.3px;transform:scaleX(1.020);margin-right:0.41px">01</span></div>
<div class="t c" style="left:590.0px;top:348.5px;width:37.5px;height:46px;line-height:46px;font-size:17.6px;color:#15171a;font-weight:bold;"><span class="l" style="font-size:18.3px;transform:scaleX(1.020);margin-right:0.41px">02</span></div>
<div class="t c" style="left:627.5px;top:348.5px;width:37.5px;height:46px;line-height:46px;font-size:17.6px;color:#15171a;font-weight:bold;"><span class="l" style="font-size:18.3px;transform:scaleX(1.020);margin-right:0.41px">03</span></div>
<div class="t c" style="left:665.0px;top:348.5px;width:37.5px;height:46px;line-height:46px;font-size:17.6px;color:#15171a;font-weight:bold;"><span class="l" style="font-size:18.3px;transform:scaleX(1.020);margin-right:0.41px">04</span></div>
<div class="t c" style="left:702.5px;top:348.5px;width:37.5px;height:46px;line-height:46px;font-size:17.6px;color:#15171a;font-weight:bold;"><span class="l" style="font-size:18.3px;transform:scaleX(1.020);margin-right:0.41px">05</span></div>
<div class="t c" style="left:740.0px;top:348.5px;width:37.5px;height:46px;line-height:46px;font-size:17.6px;color:#15171a;font-weight:bold;"><span class="l" style="font-size:18.3px;transform:scaleX(1.020);margin-right:0.41px">06</span></div>
<div class="t c" style="left:777.5px;top:348.5px;width:37.5px;height:46px;line-height:46px;font-size:17.6px;color:#15171a;font-weight:bold;"><span class="l" style="font-size:18.3px;transform:scaleX(1.020);margin-right:0.41px">07</span></div>
<div class="t c" style="left:815.0px;top:348.5px;width:37.5px;height:46px;line-height:46px;font-size:17.6px;color:#15171a;font-weight:bold;"><span class="l" style="font-size:18.3px;transform:scaleX(1.020);margin-right:0.41px">08</span></div>
<div class="t c" style="left:852.5px;top:348.5px;width:37.5px;height:46px;line-height:46px;font-size:17.6px;color:#15171a;font-weight:bold;"><span class="l" style="font-size:18.3px;transform:scaleX(1.020);margin-right:0.41px">09</span></div>
<div class="t c" style="left:890.0px;top:348.5px;width:37.5px;height:46px;line-height:46px;font-size:17.6px;color:#15171a;font-weight:bold;"><span class="l" style="font-size:18.3px;transform:scaleX(0.927);margin-right:-1.72px">0A</span></div>
<div class="t c" style="left:927.5px;top:348.5px;width:37.5px;height:46px;line-height:46px;font-size:17.6px;color:#15171a;font-weight:bold;"><span class="l" style="font-size:18.3px;transform:scaleX(0.957);margin-right:-1.02px">0B</span></div>
<div class="t c" style="left:965.0px;top:348.5px;width:37.5px;height:46px;line-height:46px;font-size:17.6px;color:#15171a;font-weight:bold;"><span class="l" style="font-size:18.3px;transform:scaleX(0.938);margin-right:-1.45px">0C</span></div>
<div class="t c" style="left:1002.5px;top:348.5px;width:37.5px;height:46px;line-height:46px;font-size:17.6px;color:#15171a;font-weight:bold;"><span class="l" style="font-size:18.3px;transform:scaleX(0.981);margin-right:-0.44px">0D</span></div>
<div class="t c" style="left:1040.0px;top:348.5px;width:37.5px;height:46px;line-height:46px;font-size:17.6px;color:#15171a;font-weight:bold;"><span class="l" style="font-size:18.3px;transform:scaleX(0.947);margin-right:-1.19px">0E</span></div>
<div class="t c" style="left:1077.5px;top:348.5px;width:37.5px;height:46px;line-height:46px;font-size:17.6px;color:#15171a;font-weight:bold;"><span class="l" style="font-size:18.3px;transform:scaleX(0.969);margin-right:-0.67px">0F</span></div>
<div class="t c" style="left:1140px;top:348.5px;width:390px;height:46px;line-height:46px;font-size:17.6px;color:#15171a;font-weight:bold;"><span class="l" style="font-size:18.3px;transform:scaleX(0.931);margin-right:-3.39px">ASCII</span></div>
<div class="t c" style="left:391px;top:394.9px;width:114px;height:40px;line-height:40px;font-size:17.6px;color:#1c1f24;"><span class="l" style="font-size:18.3px;transform:scaleX(0.960);margin-right:-3.30px">00000000</span></div>
<div class="t c" style="left:515.0px;top:394.9px;width:37.5px;height:40px;line-height:40px;font-size:17.6px;color:#1c1f24;"><span class="l" style="font-size:18.3px;transform:scaleX(0.959);margin-right:-0.83px">89</span></div>
<div class="t c" style="left:1145.0px;top:394.9px;width:22.5px;height:40px;line-height:40px;font-size:17.6px;color:#1c1f24;"><span class="l" style="font-size:18.3px;transform:scaleX(0.963);margin-right:-0.19px">.</span></div>
<div class="t c" style="left:552.5px;top:394.9px;width:37.5px;height:40px;line-height:40px;font-size:17.6px;color:#1c1f24;"><span class="l" style="font-size:18.3px;transform:scaleX(0.959);margin-right:-0.83px">50</span></div>
<div class="t c" style="left:1167.5px;top:394.9px;width:22.5px;height:40px;line-height:40px;font-size:17.6px;color:#1c1f24;"><span class="l" style="font-size:18.3px;transform:scaleX(0.912);margin-right:-1.08px">P</span></div>
<div class="t c" style="left:590.0px;top:394.9px;width:37.5px;height:40px;line-height:40px;font-size:17.6px;color:#1c1f24;"><span class="l" style="font-size:18.3px;transform:scaleX(0.900);margin-right:-2.25px">4E</span></div>
<div class="t c" style="left:1190.0px;top:394.9px;width:22.5px;height:40px;line-height:40px;font-size:17.6px;color:#1c1f24;"><span class="l" style="font-size:18.3px;transform:scaleX(0.963);margin-right:-0.48px">N</span></div>
<div class="t c" style="left:627.5px;top:394.9px;width:37.5px;height:40px;line-height:40px;font-size:17.6px;color:#1c1f24;"><span class="l" style="font-size:18.3px;transform:scaleX(0.959);margin-right:-0.83px">47</span></div>
<div class="t c" style="left:1212.5px;top:394.9px;width:22.5px;height:40px;line-height:40px;font-size:17.6px;color:#1c1f24;"><span class="l" style="font-size:18.3px;transform:scaleX(0.852);margin-right:-2.11px">G</span></div>
<div class="t c" style="left:665.0px;top:394.9px;width:37.5px;height:40px;line-height:40px;font-size:17.6px;color:#1c1f24;"><span class="l" style="font-size:18.3px;transform:scaleX(0.935);margin-right:-1.52px">0D</span></div>
<div class="t c" style="left:1235.0px;top:394.9px;width:22.5px;height:40px;line-height:40px;font-size:17.6px;color:#1c1f24;"><span class="l" style="font-size:18.3px;transform:scaleX(0.963);margin-right:-0.19px">.</span></div>
<div class="t c" style="left:702.5px;top:394.9px;width:37.5px;height:40px;line-height:40px;font-size:17.6px;color:#1c1f24;"><span class="l" style="font-size:18.3px;transform:scaleX(0.914);margin-right:-1.92px">0A</span></div>
<div class="t c" style="left:1257.5px;top:394.9px;width:22.5px;height:40px;line-height:40px;font-size:17.6px;color:#1c1f24;"><span class="l" style="font-size:18.3px;transform:scaleX(0.963);margin-right:-0.19px">.</span></div>
<div class="t c" style="left:740.0px;top:394.9px;width:37.5px;height:40px;line-height:40px;font-size:17.6px;color:#1c1f24;"><span class="l" style="font-size:18.3px;transform:scaleX(0.914);margin-right:-1.92px">1A</span></div>
<div class="t c" style="left:1280.0px;top:394.9px;width:22.5px;height:40px;line-height:40px;font-size:17.6px;color:#1c1f24;"><span class="l" style="font-size:18.3px;transform:scaleX(0.963);margin-right:-0.19px">.</span></div>
<div class="t c" style="left:777.5px;top:394.9px;width:37.5px;height:40px;line-height:40px;font-size:17.6px;color:#1c1f24;"><span class="l" style="font-size:18.3px;transform:scaleX(0.914);margin-right:-1.92px">0A</span></div>
<div class="t c" style="left:1302.5px;top:394.9px;width:22.5px;height:40px;line-height:40px;font-size:17.6px;color:#1c1f24;"><span class="l" style="font-size:18.3px;transform:scaleX(0.963);margin-right:-0.19px">.</span></div>
<div class="t c" style="left:815.0px;top:394.9px;width:37.5px;height:40px;line-height:40px;font-size:17.6px;color:#1c1f24;"><span class="l" style="font-size:18.3px;transform:scaleX(0.959);margin-right:-0.83px">00</span></div>
<div class="t c" style="left:1325.0px;top:394.9px;width:22.5px;height:40px;line-height:40px;font-size:17.6px;color:#1c1f24;"><span class="l" style="font-size:18.3px;transform:scaleX(0.963);margin-right:-0.19px">.</span></div>
<div class="t c" style="left:852.5px;top:394.9px;width:37.5px;height:40px;line-height:40px;font-size:17.6px;color:#1c1f24;"><span class="l" style="font-size:18.3px;transform:scaleX(0.959);margin-right:-0.83px">00</span></div>
<div class="t c" style="left:1347.5px;top:394.9px;width:22.5px;height:40px;line-height:40px;font-size:17.6px;color:#1c1f24;"><span class="l" style="font-size:18.3px;transform:scaleX(0.963);margin-right:-0.19px">.</span></div>
<div class="t c" style="left:890.0px;top:394.9px;width:37.5px;height:40px;line-height:40px;font-size:17.6px;color:#1c1f24;"><span class="l" style="font-size:18.3px;transform:scaleX(0.959);margin-right:-0.83px">00</span></div>
<div class="t c" style="left:1370.0px;top:394.9px;width:22.5px;height:40px;line-height:40px;font-size:17.6px;color:#1c1f24;"><span class="l" style="font-size:18.3px;transform:scaleX(0.963);margin-right:-0.19px">.</span></div>
<div class="t c" style="left:927.5px;top:394.9px;width:37.5px;height:40px;line-height:40px;font-size:17.6px;color:#1c1f24;"><span class="l" style="font-size:18.3px;transform:scaleX(0.935);margin-right:-1.52px">0D</span></div>
<div class="t c" style="left:1392.5px;top:394.9px;width:22.5px;height:40px;line-height:40px;font-size:17.6px;color:#1c1f24;"><span class="l" style="font-size:18.3px;transform:scaleX(0.963);margin-right:-0.19px">.</span></div>
<div class="t c" style="left:965.0px;top:394.9px;width:37.5px;height:40px;line-height:40px;font-size:17.6px;color:#1c1f24;"><span class="l" style="font-size:18.3px;transform:scaleX(0.959);margin-right:-0.83px">49</span></div>
<div class="t c" style="left:1415.0px;top:394.9px;width:22.5px;height:40px;line-height:40px;font-size:17.6px;color:#1c1f24;"><span class="l" style="font-size:18.3px;transform:scaleX(1.012);margin-right:0.06px">I</span></div>
<div class="t c" style="left:1002.5px;top:394.9px;width:37.5px;height:40px;line-height:40px;font-size:17.6px;color:#1c1f24;"><span class="l" style="font-size:18.3px;transform:scaleX(0.959);margin-right:-0.83px">48</span></div>
<div class="t c" style="left:1437.5px;top:394.9px;width:22.5px;height:40px;line-height:40px;font-size:17.6px;color:#1c1f24;"><span class="l" style="font-size:18.3px;transform:scaleX(0.969);margin-right:-0.41px">H</span></div>
<div class="t c" style="left:1040.0px;top:394.9px;width:37.5px;height:40px;line-height:40px;font-size:17.6px;color:#1c1f24;"><span class="l" style="font-size:18.3px;transform:scaleX(0.959);margin-right:-0.83px">44</span></div>
<div class="t c" style="left:1460.0px;top:394.9px;width:22.5px;height:40px;line-height:40px;font-size:17.6px;color:#1c1f24;"><span class="l" style="font-size:18.3px;transform:scaleX(0.916);margin-right:-1.11px">D</span></div>
<div class="t c" style="left:1077.5px;top:394.9px;width:37.5px;height:40px;line-height:40px;font-size:17.6px;color:#1c1f24;"><span class="l" style="font-size:18.3px;transform:scaleX(0.959);margin-right:-0.83px">52</span></div>
<div class="t c" style="left:1482.5px;top:394.9px;width:22.5px;height:40px;line-height:40px;font-size:17.6px;color:#1c1f24;"><span class="l" style="font-size:18.3px;transform:scaleX(0.846);margin-right:-2.03px">R</span></div>
<div class="t c" style="left:391px;top:434.9px;width:114px;height:40px;line-height:40px;font-size:17.6px;color:#1c1f24;"><span class="l" style="font-size:18.3px;transform:scaleX(0.960);margin-right:-3.30px">00000010</span></div>
<div class="t c" style="left:515.0px;top:434.9px;width:37.5px;height:40px;line-height:40px;font-size:17.6px;color:#1c1f24;"><span class="l" style="font-size:18.3px;transform:scaleX(0.959);margin-right:-0.83px">00</span></div>
<div class="t c" style="left:1145.0px;top:434.9px;width:22.5px;height:40px;line-height:40px;font-size:17.6px;color:#1c1f24;"><span class="l" style="font-size:18.3px;transform:scaleX(0.963);margin-right:-0.19px">.</span></div>
<div class="t c" style="left:552.5px;top:434.9px;width:37.5px;height:40px;line-height:40px;font-size:17.6px;color:#1c1f24;"><span class="l" style="font-size:18.3px;transform:scaleX(0.959);margin-right:-0.83px">00</span></div>
<div class="t c" style="left:1167.5px;top:434.9px;width:22.5px;height:40px;line-height:40px;font-size:17.6px;color:#1c1f24;"><span class="l" style="font-size:18.3px;transform:scaleX(0.963);margin-right:-0.19px">.</span></div>
<div class="t c" style="left:590.0px;top:434.9px;width:37.5px;height:40px;line-height:40px;font-size:17.6px;color:#1c1f24;"><span class="l" style="font-size:18.3px;transform:scaleX(0.959);margin-right:-0.83px">07</span></div>
<div class="t c" style="left:1190.0px;top:434.9px;width:22.5px;height:40px;line-height:40px;font-size:17.6px;color:#1c1f24;"><span class="l" style="font-size:18.3px;transform:scaleX(0.963);margin-right:-0.19px">.</span></div>
<div class="t c" style="left:627.5px;top:434.9px;width:37.5px;height:40px;line-height:40px;font-size:17.6px;color:#1c1f24;"><span class="l" style="font-size:18.3px;transform:scaleX(0.900);margin-right:-2.25px">7E</span></div>
<div class="t c" style="left:1212.5px;top:434.9px;width:22.5px;height:40px;line-height:40px;font-size:17.6px;color:#1c1f24;"><span class="l" style="font-size:18.3px;transform:scaleX(0.914);margin-right:-0.92px">~</span></div>
<div class="t c" style="left:665.0px;top:434.9px;width:37.5px;height:40px;line-height:40px;font-size:17.6px;color:#1c1f24;"><span class="l" style="font-size:18.3px;transform:scaleX(0.959);margin-right:-0.83px">00</span></div>
<div class="t c" style="left:1235.0px;top:434.9px;width:22.5px;height:40px;line-height:40px;font-size:17.6px;color:#1c1f24;"><span class="l" style="font-size:18.3px;transform:scaleX(0.963);margin-right:-0.19px">.</span></div>
<div class="t c" style="left:702.5px;top:434.9px;width:37.5px;height:40px;line-height:40px;font-size:17.6px;color:#1c1f24;"><span class="l" style="font-size:18.3px;transform:scaleX(0.959);margin-right:-0.83px">00</span></div>
<div class="t c" style="left:1257.5px;top:434.9px;width:22.5px;height:40px;line-height:40px;font-size:17.6px;color:#1c1f24;"><span class="l" style="font-size:18.3px;transform:scaleX(0.963);margin-right:-0.19px">.</span></div>
<div class="t c" style="left:740.0px;top:434.9px;width:37.5px;height:40px;line-height:40px;font-size:17.6px;color:#1c1f24;"><span class="l" style="font-size:18.3px;transform:scaleX(0.959);margin-right:-0.83px">04</span></div>
<div class="t c" style="left:1280.0px;top:434.9px;width:22.5px;height:40px;line-height:40px;font-size:17.6px;color:#1c1f24;"><span class="l" style="font-size:18.3px;transform:scaleX(0.963);margin-right:-0.19px">.</span></div>
<div class="t c" style="left:777.5px;top:434.9px;width:37.5px;height:40px;line-height:40px;font-size:17.6px;color:#1c1f24;"><span class="l" style="font-size:18.3px;transform:scaleX(0.914);margin-right:-1.92px">8A</span></div>
<div class="t c" style="left:1302.5px;top:434.9px;width:22.5px;height:40px;line-height:40px;font-size:17.6px;color:#1c1f24;"><span class="l" style="font-size:18.3px;transform:scaleX(0.963);margin-right:-0.19px">.</span></div>
<div class="t c" style="left:815.0px;top:434.9px;width:37.5px;height:40px;line-height:40px;font-size:17.6px;color:#1c1f24;"><span class="l" style="font-size:18.3px;transform:scaleX(0.959);margin-right:-0.83px">08</span></div>
<div class="t c" style="left:1325.0px;top:434.9px;width:22.5px;height:40px;line-height:40px;font-size:17.6px;color:#1c1f24;"><span class="l" style="font-size:18.3px;transform:scaleX(0.963);margin-right:-0.19px">.</span></div>
<div class="t c" style="left:852.5px;top:434.9px;width:37.5px;height:40px;line-height:40px;font-size:17.6px;color:#1c1f24;"><span class="l" style="font-size:18.3px;transform:scaleX(0.959);margin-right:-0.83px">06</span></div>
<div class="t c" style="left:1347.5px;top:434.9px;width:22.5px;height:40px;line-height:40px;font-size:17.6px;color:#1c1f24;"><span class="l" style="font-size:18.3px;transform:scaleX(0.963);margin-right:-0.19px">.</span></div>
<div class="t c" style="left:890.0px;top:434.9px;width:37.5px;height:40px;line-height:40px;font-size:17.6px;color:#1c1f24;"><span class="l" style="font-size:18.3px;transform:scaleX(0.959);margin-right:-0.83px">00</span></div>
<div class="t c" style="left:1370.0px;top:434.9px;width:22.5px;height:40px;line-height:40px;font-size:17.6px;color:#1c1f24;"><span class="l" style="font-size:18.3px;transform:scaleX(0.963);margin-right:-0.19px">.</span></div>
<div class="t c" style="left:927.5px;top:434.9px;width:37.5px;height:40px;line-height:40px;font-size:17.6px;color:#1c1f24;"><span class="l" style="font-size:18.3px;transform:scaleX(0.959);margin-right:-0.83px">00</span></div>
<div class="t c" style="left:1392.5px;top:434.9px;width:22.5px;height:40px;line-height:40px;font-size:17.6px;color:#1c1f24;"><span class="l" style="font-size:18.3px;transform:scaleX(0.963);margin-right:-0.19px">.</span></div>
<div class="t c" style="left:965.0px;top:434.9px;width:37.5px;height:40px;line-height:40px;font-size:17.6px;color:#1c1f24;"><span class="l" style="font-size:18.3px;transform:scaleX(0.959);margin-right:-0.83px">00</span></div>
<div class="t c" style="left:1415.0px;top:434.9px;width:22.5px;height:40px;line-height:40px;font-size:17.6px;color:#1c1f24;"><span class="l" style="font-size:18.3px;transform:scaleX(0.963);margin-right:-0.19px">.</span></div>
<div class="t c" style="left:1002.5px;top:434.9px;width:37.5px;height:40px;line-height:40px;font-size:17.6px;color:#1c1f24;"><span class="l" style="font-size:18.3px;transform:scaleX(0.953);margin-right:-1.06px">B1</span></div>
<div class="t c" style="left:1437.5px;top:434.9px;width:22.5px;height:40px;line-height:40px;font-size:17.6px;color:#1c1f24;"><span class="l" style="font-size:18.3px;transform:scaleX(0.963);margin-right:-0.19px">.</span></div>
<div class="t c" style="left:1040.0px;top:434.9px;width:37.5px;height:40px;line-height:40px;font-size:17.6px;color:#1c1f24;"><span class="l" style="font-size:18.3px;transform:scaleX(0.959);margin-right:-0.83px">54</span></div>
<div class="t c" style="left:1460.0px;top:434.9px;width:22.5px;height:40px;line-height:40px;font-size:17.6px;color:#1c1f24;"><span class="l" style="font-size:18.3px;transform:scaleX(0.943);margin-right:-0.64px">T</span></div>
<div class="t c" style="left:1077.5px;top:434.9px;width:37.5px;height:40px;line-height:40px;font-size:17.6px;color:#1c1f24;"><span class="l" style="font-size:18.3px;transform:scaleX(0.858);margin-right:-3.45px">CF</span></div>
<div class="t c" style="left:1482.5px;top:434.9px;width:22.5px;height:40px;line-height:40px;font-size:17.6px;color:#1c1f24;"><span class="l" style="font-size:18.3px;transform:scaleX(0.963);margin-right:-0.19px">.</span></div>
<div class="t c" style="left:391px;top:474.9px;width:114px;height:40px;line-height:40px;font-size:17.6px;color:#1c1f24;"><span class="l" style="font-size:18.3px;transform:scaleX(0.960);margin-right:-3.30px">00000020</span></div>
<div class="t c" style="left:515.0px;top:474.9px;width:37.5px;height:40px;line-height:40px;font-size:17.6px;color:#1c1f24;"><span class="l" style="font-size:18.3px;transform:scaleX(0.959);margin-right:-0.83px">17</span></div>
<div class="t c" style="left:1145.0px;top:474.9px;width:22.5px;height:40px;line-height:40px;font-size:17.6px;color:#1c1f24;"><span class="l" style="font-size:18.3px;transform:scaleX(0.963);margin-right:-0.19px">.</span></div>
<div class="t c" style="left:552.5px;top:474.9px;width:37.5px;height:40px;line-height:40px;font-size:17.6px;color:#1c1f24;"><span class="l" style="font-size:18.3px;transform:scaleX(0.959);margin-right:-0.83px">00</span></div>
<div class="t c" style="left:1167.5px;top:474.9px;width:22.5px;height:40px;line-height:40px;font-size:17.6px;color:#1c1f24;"><span class="l" style="font-size:18.3px;transform:scaleX(0.963);margin-right:-0.19px">.</span></div>
<div class="t c" style="left:590.0px;top:474.9px;width:37.5px;height:40px;line-height:40px;font-size:17.6px;color:#1c1f24;"><span class="l" style="font-size:18.3px;transform:scaleX(0.959);margin-right:-0.83px">00</span></div>
<div class="t c" style="left:1190.0px;top:474.9px;width:22.5px;height:40px;line-height:40px;font-size:17.6px;color:#1c1f24;"><span class="l" style="font-size:18.3px;transform:scaleX(0.963);margin-right:-0.19px">.</span></div>
<div class="t c" style="left:627.5px;top:474.9px;width:37.5px;height:40px;line-height:40px;font-size:17.6px;color:#1c1f24;"><span class="l" style="font-size:18.3px;transform:scaleX(0.959);margin-right:-0.83px">00</span></div>
<div class="t c" style="left:1212.5px;top:474.9px;width:22.5px;height:40px;line-height:40px;font-size:17.6px;color:#1c1f24;"><span class="l" style="font-size:18.3px;transform:scaleX(0.963);margin-right:-0.19px">.</span></div>
<div class="t c" style="left:665.0px;top:474.9px;width:37.5px;height:40px;line-height:40px;font-size:17.6px;color:#1c1f24;"><span class="l" style="font-size:18.3px;transform:scaleX(0.959);margin-right:-0.83px">01</span></div>
<div class="t c" style="left:1235.0px;top:474.9px;width:22.5px;height:40px;line-height:40px;font-size:17.6px;color:#1c1f24;"><span class="l" style="font-size:18.3px;transform:scaleX(0.963);margin-right:-0.19px">.</span></div>
<div class="t c" style="left:702.5px;top:474.9px;width:37.5px;height:40px;line-height:40px;font-size:17.6px;color:#1c1f24;"><span class="l" style="font-size:18.3px;transform:scaleX(0.959);margin-right:-0.83px">73</span></div>
<div class="t c" style="left:1257.5px;top:474.9px;width:22.5px;height:40px;line-height:40px;font-size:17.6px;color:#1c1f24;"><span class="l" style="font-size:18.3px;transform:scaleX(0.899);margin-right:-0.92px">s</span></div>
<div class="t c" style="left:740.0px;top:474.9px;width:37.5px;height:40px;line-height:40px;font-size:17.6px;color:#1c1f24;"><span class="l" style="font-size:18.3px;transform:scaleX(0.959);margin-right:-0.83px">52</span></div>
<div class="t c" style="left:1280.0px;top:474.9px;width:22.5px;height:40px;line-height:40px;font-size:17.6px;color:#1c1f24;"><span class="l" style="font-size:18.3px;transform:scaleX(0.846);margin-right:-2.03px">R</span></div>
<div class="t c" style="left:777.5px;top:474.9px;width:37.5px;height:40px;line-height:40px;font-size:17.6px;color:#1c1f24;"><span class="l" style="font-size:18.3px;transform:scaleX(0.959);margin-right:-0.83px">47</span></div>
<div class="t c" style="left:1302.5px;top:474.9px;width:22.5px;height:40px;line-height:40px;font-size:17.6px;color:#1c1f24;"><span class="l" style="font-size:18.3px;transform:scaleX(0.852);margin-right:-2.11px">G</span></div>
<div class="t c" style="left:815.0px;top:474.9px;width:37.5px;height:40px;line-height:40px;font-size:17.6px;color:#1c1f24;"><span class="l" style="font-size:18.3px;transform:scaleX(0.959);margin-right:-0.83px">42</span></div>
<div class="t c" style="left:1325.0px;top:474.9px;width:22.5px;height:40px;line-height:40px;font-size:17.6px;color:#1c1f24;"><span class="l" style="font-size:18.3px;transform:scaleX(0.946);margin-right:-0.66px">B</span></div>
<div class="t c" style="left:852.5px;top:474.9px;width:37.5px;height:40px;line-height:40px;font-size:17.6px;color:#1c1f24;"><span class="l" style="font-size:18.3px;transform:scaleX(0.959);margin-right:-0.83px">00</span></div>
<div class="t c" style="left:1347.5px;top:474.9px;width:22.5px;height:40px;line-height:40px;font-size:17.6px;color:#1c1f24;"><span class="l" style="font-size:18.3px;transform:scaleX(0.963);margin-right:-0.19px">.</span></div>
<div class="t c" style="left:890.0px;top:474.9px;width:37.5px;height:40px;line-height:40px;font-size:17.6px;color:#1c1f24;"><span class="l" style="font-size:18.3px;transform:scaleX(0.862);margin-right:-3.36px">AE</span></div>
<div class="t c" style="left:1370.0px;top:474.9px;width:22.5px;height:40px;line-height:40px;font-size:17.6px;color:#1c1f24;"><span class="l" style="font-size:18.3px;transform:scaleX(0.963);margin-right:-0.19px">.</span></div>
<div class="t c" style="left:927.5px;top:474.9px;width:37.5px;height:40px;line-height:40px;font-size:17.6px;color:#1c1f24;"><span class="l" style="font-size:18.3px;transform:scaleX(0.849);margin-right:-3.83px">CE</span></div>
<div class="t c" style="left:1392.5px;top:474.9px;width:22.5px;height:40px;line-height:40px;font-size:17.6px;color:#1c1f24;"><span class="l" style="font-size:18.3px;transform:scaleX(0.963);margin-right:-0.19px">.</span></div>
<div class="t c" style="left:965.0px;top:474.9px;width:37.5px;height:40px;line-height:40px;font-size:17.6px;color:#1c1f24;"><span class="l" style="font-size:18.3px;transform:scaleX(0.898);margin-right:-2.39px">1C</span></div>
<div class="t c" style="left:1415.0px;top:474.9px;width:22.5px;height:40px;line-height:40px;font-size:17.6px;color:#1c1f24;"><span class="l" style="font-size:18.3px;transform:scaleX(0.963);margin-right:-0.19px">.</span></div>
<div class="t c" style="left:1002.5px;top:474.9px;width:37.5px;height:40px;line-height:40px;font-size:17.6px;color:#1c1f24;"><span class="l" style="font-size:18.3px;transform:scaleX(0.900);margin-right:-2.25px">E9</span></div>
<div class="t c" style="left:1437.5px;top:474.9px;width:22.5px;height:40px;line-height:40px;font-size:17.6px;color:#1c1f24;"><span class="l" style="font-size:18.3px;transform:scaleX(0.963);margin-right:-0.19px">.</span></div>
<div class="t c" style="left:1040.0px;top:474.9px;width:37.5px;height:40px;line-height:40px;font-size:17.6px;color:#1c1f24;"><span class="l" style="font-size:18.3px;transform:scaleX(0.959);margin-right:-0.83px">00</span></div>
<div class="t c" style="left:1460.0px;top:474.9px;width:22.5px;height:40px;line-height:40px;font-size:17.6px;color:#1c1f24;"><span class="l" style="font-size:18.3px;transform:scaleX(0.963);margin-right:-0.19px">.</span></div>
<div class="t c" style="left:1077.5px;top:474.9px;width:37.5px;height:40px;line-height:40px;font-size:17.6px;color:#1c1f24;"><span class="l" style="font-size:18.3px;transform:scaleX(0.959);margin-right:-0.83px">00</span></div>
<div class="t c" style="left:1482.5px;top:474.9px;width:22.5px;height:40px;line-height:40px;font-size:17.6px;color:#1c1f24;"><span class="l" style="font-size:18.3px;transform:scaleX(0.963);margin-right:-0.19px">.</span></div>
<div class="t c" style="left:391px;top:514.9px;width:114px;height:40px;line-height:40px;font-size:17.6px;color:#1c1f24;"><span class="l" style="font-size:18.3px;transform:scaleX(0.960);margin-right:-3.30px">00000030</span></div>
<div class="t c" style="left:515.0px;top:514.9px;width:37.5px;height:40px;line-height:40px;font-size:17.6px;color:#1c1f24;"><span class="l" style="font-size:18.3px;transform:scaleX(0.959);margin-right:-0.83px">00</span></div>
<div class="t c" style="left:1145.0px;top:514.9px;width:22.5px;height:40px;line-height:40px;font-size:17.6px;color:#1c1f24;"><span class="l" style="font-size:18.3px;transform:scaleX(0.963);margin-right:-0.19px">.</span></div>
<div class="t c" style="left:552.5px;top:514.9px;width:37.5px;height:40px;line-height:40px;font-size:17.6px;color:#1c1f24;"><span class="l" style="font-size:18.3px;transform:scaleX(0.959);margin-right:-0.83px">04</span></div>
<div class="t c" style="left:1167.5px;top:514.9px;width:22.5px;height:40px;line-height:40px;font-size:17.6px;color:#1c1f24;"><span class="l" style="font-size:18.3px;transform:scaleX(0.963);margin-right:-0.19px">.</span></div>
<div class="t c" style="left:590.0px;top:514.9px;width:37.5px;height:40px;line-height:40px;font-size:17.6px;color:#1c1f24;"><span class="l" style="font-size:18.3px;transform:scaleX(0.959);margin-right:-0.83px">67</span></div>
<div class="t c" style="left:1190.0px;top:514.9px;width:22.5px;height:40px;line-height:40px;font-size:17.6px;color:#1c1f24;"><span class="l" style="font-size:18.3px;transform:scaleX(0.975);margin-right:-0.25px">g</span></div>
<div class="t c" style="left:627.5px;top:514.9px;width:37.5px;height:40px;line-height:40px;font-size:17.6px;color:#1c1f24;"><span class="l" style="font-size:18.3px;transform:scaleX(0.959);margin-right:-0.83px">41</span></div>
<div class="t c" style="left:1212.5px;top:514.9px;width:22.5px;height:40px;line-height:40px;font-size:17.6px;color:#1c1f24;"><span class="l" style="font-size:18.3px;transform:scaleX(0.876);margin-right:-1.52px">A</span></div>
<div class="t c" style="left:665.0px;top:514.9px;width:37.5px;height:40px;line-height:40px;font-size:17.6px;color:#1c1f24;"><span class="l" style="font-size:18.3px;transform:scaleX(0.935);margin-right:-1.52px">4D</span></div>
<div class="t c" style="left:1235.0px;top:514.9px;width:22.5px;height:40px;line-height:40px;font-size:17.6px;color:#1c1f24;"><span class="l" style="font-size:18.3px;transform:scaleX(0.938);margin-right:-0.95px">M</span></div>
<div class="t c" style="left:702.5px;top:514.9px;width:37.5px;height:40px;line-height:40px;font-size:17.6px;color:#1c1f24;"><span class="l" style="font-size:18.3px;transform:scaleX(0.959);margin-right:-0.83px">41</span></div>
<div class="t c" style="left:1257.5px;top:514.9px;width:22.5px;height:40px;line-height:40px;font-size:17.6px;color:#1c1f24;"><span class="l" style="font-size:18.3px;transform:scaleX(0.876);margin-right:-1.52px">A</span></div>
<div class="t c" style="left:740.0px;top:514.9px;width:37.5px;height:40px;line-height:40px;font-size:17.6px;color:#1c1f24;"><span class="l" style="font-size:18.3px;transform:scaleX(0.959);margin-right:-0.83px">00</span></div>
<div class="t c" style="left:1280.0px;top:514.9px;width:22.5px;height:40px;line-height:40px;font-size:17.6px;color:#1c1f24;"><span class="l" style="font-size:18.3px;transform:scaleX(0.963);margin-right:-0.19px">.</span></div>
<div class="t c" style="left:777.5px;top:514.9px;width:37.5px;height:40px;line-height:40px;font-size:17.6px;color:#1c1f24;"><span class="l" style="font-size:18.3px;transform:scaleX(0.959);margin-right:-0.83px">00</span></div>
<div class="t c" style="left:1302.5px;top:514.9px;width:22.5px;height:40px;line-height:40px;font-size:17.6px;color:#1c1f24;"><span class="l" style="font-size:18.3px;transform:scaleX(0.963);margin-right:-0.19px">.</span></div>
<div class="t c" style="left:815.0px;top:514.9px;width:37.5px;height:40px;line-height:40px;font-size:17.6px;color:#1c1f24;"><span class="l" style="font-size:18.3px;transform:scaleX(0.953);margin-right:-1.06px">B1</span></div>
<div class="t c" style="left:1325.0px;top:514.9px;width:22.5px;height:40px;line-height:40px;font-size:17.6px;color:#1c1f24;"><span class="l" style="font-size:18.3px;transform:scaleX(0.963);margin-right:-0.19px">.</span></div>
<div class="t c" style="left:852.5px;top:514.9px;width:37.5px;height:40px;line-height:40px;font-size:17.6px;color:#1c1f24;"><span class="l" style="font-size:18.3px;transform:scaleX(0.912);margin-right:-1.88px">8F</span></div>
<div class="t c" style="left:1347.5px;top:514.9px;width:22.5px;height:40px;line-height:40px;font-size:17.6px;color:#1c1f24;"><span class="l" style="font-size:18.3px;transform:scaleX(0.963);margin-right:-0.19px">.</span></div>
<div class="t c" style="left:890.0px;top:514.9px;width:37.5px;height:40px;line-height:40px;font-size:17.6px;color:#1c1f24;"><span class="l" style="font-size:18.3px;transform:scaleX(0.953);margin-right:-1.06px">0B</span></div>
<div class="t c" style="left:1370.0px;top:514.9px;width:22.5px;height:40px;line-height:40px;font-size:17.6px;color:#1c1f24;"><span class="l" style="font-size:18.3px;transform:scaleX(0.963);margin-right:-0.19px">.</span></div>
<div class="t c" style="left:927.5px;top:514.9px;width:37.5px;height:40px;line-height:40px;font-size:17.6px;color:#1c1f24;"><span class="l" style="font-size:18.3px;transform:scaleX(0.851);margin-right:-3.64px">FC</span></div>
<div class="t c" style="left:1392.5px;top:514.9px;width:22.5px;height:40px;line-height:40px;font-size:17.6px;color:#1c1f24;"><span class="l" style="font-size:18.3px;transform:scaleX(0.963);margin-right:-0.19px">.</span></div>
<div class="t c" style="left:965.0px;top:514.9px;width:37.5px;height:40px;line-height:40px;font-size:17.6px;color:#1c1f24;"><span class="l" style="font-size:18.3px;transform:scaleX(0.959);margin-right:-0.83px">61</span></div>
<div class="t c" style="left:1415.0px;top:514.9px;width:22.5px;height:40px;line-height:40px;font-size:17.6px;color:#1c1f24;"><span class="l" style="font-size:18.3px;transform:scaleX(0.972);margin-right:-0.28px">a</span></div>
<div class="t c" style="left:1002.5px;top:514.9px;width:37.5px;height:40px;line-height:40px;font-size:17.6px;color:#1c1f24;"><span class="l" style="font-size:18.3px;transform:scaleX(0.959);margin-right:-0.83px">05</span></div>
<div class="t c" style="left:1437.5px;top:514.9px;width:22.5px;height:40px;line-height:40px;font-size:17.6px;color:#1c1f24;"><span class="l" style="font-size:18.3px;transform:scaleX(0.963);margin-right:-0.19px">.</span></div>
<div class="t c" style="left:1040.0px;top:514.9px;width:37.5px;height:40px;line-height:40px;font-size:17.6px;color:#1c1f24;"><span class="l" style="font-size:18.3px;transform:scaleX(0.959);margin-right:-0.83px">00</span></div>
<div class="t c" style="left:1460.0px;top:514.9px;width:22.5px;height:40px;line-height:40px;font-size:17.6px;color:#1c1f24;"><span class="l" style="font-size:18.3px;transform:scaleX(0.963);margin-right:-0.19px">.</span></div>
<div class="t c" style="left:1077.5px;top:514.9px;width:37.5px;height:40px;line-height:40px;font-size:17.6px;color:#1c1f24;"><span class="l" style="font-size:18.3px;transform:scaleX(0.959);margin-right:-0.83px">00</span></div>
<div class="t c" style="left:1482.5px;top:514.9px;width:22.5px;height:40px;line-height:40px;font-size:17.6px;color:#1c1f24;"><span class="l" style="font-size:18.3px;transform:scaleX(0.963);margin-right:-0.19px">.</span></div>
<div class="t c" style="left:391px;top:554.9px;width:114px;height:40px;line-height:40px;font-size:17.6px;color:#1c1f24;"><span class="l" style="font-size:18.3px;transform:scaleX(0.960);margin-right:-3.30px">00000040</span></div>
<div class="t c" style="left:515.0px;top:554.9px;width:37.5px;height:40px;line-height:40px;font-size:17.6px;color:#1c1f24;"><span class="l" style="font-size:18.3px;transform:scaleX(0.959);margin-right:-0.83px">00</span></div>
<div class="t c" style="left:1145.0px;top:554.9px;width:22.5px;height:40px;line-height:40px;font-size:17.6px;color:#1c1f24;"><span class="l" style="font-size:18.3px;transform:scaleX(0.963);margin-right:-0.19px">.</span></div>
<div class="t c" style="left:552.5px;top:554.9px;width:37.5px;height:40px;line-height:40px;font-size:17.6px;color:#1c1f24;"><span class="l" style="font-size:18.3px;transform:scaleX(0.959);margin-right:-0.83px">09</span></div>
<div class="t c" style="left:1167.5px;top:554.9px;width:22.5px;height:40px;line-height:40px;font-size:17.6px;color:#1c1f24;"><span class="l" style="font-size:18.3px;transform:scaleX(0.963);margin-right:-0.19px">.</span></div>
<div class="t c" style="left:590.0px;top:554.9px;width:37.5px;height:40px;line-height:40px;font-size:17.6px;color:#1c1f24;"><span class="l" style="font-size:18.3px;transform:scaleX(0.959);margin-right:-0.83px">70</span></div>
<div class="t c" style="left:1190.0px;top:554.9px;width:22.5px;height:40px;line-height:40px;font-size:17.6px;color:#1c1f24;"><span class="l" style="font-size:18.3px;transform:scaleX(1.072);margin-right:0.73px">p</span></div>
<div class="t c" style="left:627.5px;top:554.9px;width:37.5px;height:40px;line-height:40px;font-size:17.6px;color:#1c1f24;"><span class="l" style="font-size:18.3px;transform:scaleX(0.959);margin-right:-0.83px">48</span></div>
<div class="t c" style="left:1212.5px;top:554.9px;width:22.5px;height:40px;line-height:40px;font-size:17.6px;color:#1c1f24;"><span class="l" style="font-size:18.3px;transform:scaleX(0.969);margin-right:-0.41px">H</span></div>
<div class="t c" style="left:665.0px;top:554.9px;width:37.5px;height:40px;line-height:40px;font-size:17.6px;color:#1c1f24;"><span class="l" style="font-size:18.3px;transform:scaleX(0.959);margin-right:-0.83px">59</span></div>
<div class="t c" style="left:1235.0px;top:554.9px;width:22.5px;height:40px;line-height:40px;font-size:17.6px;color:#1c1f24;"><span class="l" style="font-size:18.3px;transform:scaleX(0.765);margin-right:-2.88px">Y</span></div>
<div class="t c" style="left:702.5px;top:554.9px;width:37.5px;height:40px;line-height:40px;font-size:17.6px;color:#1c1f24;"><span class="l" style="font-size:18.3px;transform:scaleX(0.959);margin-right:-0.83px">73</span></div>
<div class="t c" style="left:1257.5px;top:554.9px;width:22.5px;height:40px;line-height:40px;font-size:17.6px;color:#1c1f24;"><span class="l" style="font-size:18.3px;transform:scaleX(0.899);margin-right:-0.92px">s</span></div>
<div class="t c" style="left:740.0px;top:554.9px;width:37.5px;height:40px;line-height:40px;font-size:17.6px;color:#1c1f24;"><span class="l" style="font-size:18.3px;transform:scaleX(0.959);margin-right:-0.83px">00</span></div>
<div class="t c" style="left:1280.0px;top:554.9px;width:22.5px;height:40px;line-height:40px;font-size:17.6px;color:#1c1f24;"><span class="l" style="font-size:18.3px;transform:scaleX(0.963);margin-right:-0.19px">.</span></div>
<div class="t c" style="left:777.5px;top:554.9px;width:37.5px;height:40px;line-height:40px;font-size:17.6px;color:#1c1f24;"><span class="l" style="font-size:18.3px;transform:scaleX(0.959);margin-right:-0.83px">00</span></div>
<div class="t c" style="left:1302.5px;top:554.9px;width:22.5px;height:40px;line-height:40px;font-size:17.6px;color:#1c1f24;"><span class="l" style="font-size:18.3px;transform:scaleX(0.963);margin-right:-0.19px">.</span></div>
<div class="t c" style="left:815.0px;top:554.9px;width:37.5px;height:40px;line-height:40px;font-size:17.6px;color:#1c1f24;"><span class="l" style="font-size:18.3px;transform:scaleX(0.959);margin-right:-0.83px">12</span></div>
<div class="t c" style="left:1325.0px;top:554.9px;width:22.5px;height:40px;line-height:40px;font-size:17.6px;color:#1c1f24;"><span class="l" style="font-size:18.3px;transform:scaleX(0.963);margin-right:-0.19px">.</span></div>
<div class="t c" style="left:852.5px;top:554.9px;width:37.5px;height:40px;line-height:40px;font-size:17.6px;color:#1c1f24;"><span class="l" style="font-size:18.3px;transform:scaleX(0.959);margin-right:-0.83px">74</span></div>
<div class="t c" style="left:1347.5px;top:554.9px;width:22.5px;height:40px;line-height:40px;font-size:17.6px;color:#1c1f24;"><span class="l" style="font-size:18.3px;transform:scaleX(1.304);margin-right:1.55px">t</span></div>
<div class="t c" style="left:890.0px;top:554.9px;width:37.5px;height:40px;line-height:40px;font-size:17.6px;color:#1c1f24;"><span class="l" style="font-size:18.3px;transform:scaleX(0.959);margin-right:-0.83px">00</span></div>
<div class="t c" style="left:1370.0px;top:554.9px;width:22.5px;height:40px;line-height:40px;font-size:17.6px;color:#1c1f24;"><span class="l" style="font-size:18.3px;transform:scaleX(0.963);margin-right:-0.19px">.</span></div>
<div class="t c" style="left:927.5px;top:554.9px;width:37.5px;height:40px;line-height:40px;font-size:17.6px;color:#1c1f24;"><span class="l" style="font-size:18.3px;transform:scaleX(0.959);margin-right:-0.83px">00</span></div>
<div class="t c" style="left:1392.5px;top:554.9px;width:22.5px;height:40px;line-height:40px;font-size:17.6px;color:#1c1f24;"><span class="l" style="font-size:18.3px;transform:scaleX(0.963);margin-right:-0.19px">.</span></div>
<div class="t c" style="left:965.0px;top:554.9px;width:37.5px;height:40px;line-height:40px;font-size:17.6px;color:#1c1f24;"><span class="l" style="font-size:18.3px;transform:scaleX(0.959);margin-right:-0.83px">12</span></div>
<div class="t c" style="left:1415.0px;top:554.9px;width:22.5px;height:40px;line-height:40px;font-size:17.6px;color:#1c1f24;"><span class="l" style="font-size:18.3px;transform:scaleX(0.963);margin-right:-0.19px">.</span></div>
<div class="t c" style="left:1002.5px;top:554.9px;width:37.5px;height:40px;line-height:40px;font-size:17.6px;color:#1c1f24;"><span class="l" style="font-size:18.3px;transform:scaleX(0.959);margin-right:-0.83px">74</span></div>
<div class="t c" style="left:1437.5px;top:554.9px;width:22.5px;height:40px;line-height:40px;font-size:17.6px;color:#1c1f24;"><span class="l" style="font-size:18.3px;transform:scaleX(1.304);margin-right:1.55px">t</span></div>
<div class="t c" style="left:1040.0px;top:554.9px;width:37.5px;height:40px;line-height:40px;font-size:17.6px;color:#1c1f24;"><span class="l" style="font-size:18.3px;transform:scaleX(0.959);margin-right:-0.83px">01</span></div>
<div class="t c" style="left:1460.0px;top:554.9px;width:22.5px;height:40px;line-height:40px;font-size:17.6px;color:#1c1f24;"><span class="l" style="font-size:18.3px;transform:scaleX(0.963);margin-right:-0.19px">.</span></div>
<div class="t c" style="left:1077.5px;top:554.9px;width:37.5px;height:40px;line-height:40px;font-size:17.6px;color:#1c1f24;"><span class="l" style="font-size:18.3px;transform:scaleX(0.884);margin-right:-2.95px">DE</span></div>
<div class="t c" style="left:1482.5px;top:554.9px;width:22.5px;height:40px;line-height:40px;font-size:17.6px;color:#1c1f24;"><span class="l" style="font-size:18.3px;transform:scaleX(0.963);margin-right:-0.19px">.</span></div>
<div class="t c" style="left:391px;top:594.9px;width:114px;height:40px;line-height:40px;font-size:17.6px;color:#1c1f24;"><span class="l" style="font-size:18.3px;transform:scaleX(0.960);margin-right:-3.30px">00000050</span></div>
<div class="t c" style="left:515.0px;top:594.9px;width:37.5px;height:40px;line-height:40px;font-size:17.6px;color:#1c1f24;"><span class="l" style="font-size:18.3px;transform:scaleX(0.959);margin-right:-0.83px">66</span></div>
<div class="t c" style="left:1145.0px;top:594.9px;width:22.5px;height:40px;line-height:40px;font-size:17.6px;color:#1c1f24;"><span class="l" style="font-size:18.3px;transform:scaleX(1.123);margin-right:0.62px">f</span></div>
<div class="t c" style="left:552.5px;top:594.9px;width:37.5px;height:40px;line-height:40px;font-size:17.6px;color:#1c1f24;"><span class="l" style="font-size:18.3px;transform:scaleX(0.912);margin-right:-1.88px">1F</span></div>
<div class="t c" style="left:1167.5px;top:594.9px;width:22.5px;height:40px;line-height:40px;font-size:17.6px;color:#1c1f24;"><span class="l" style="font-size:18.3px;transform:scaleX(0.963);margin-right:-0.19px">.</span></div>
<div class="t c" style="left:590.0px;top:594.9px;width:37.5px;height:40px;line-height:40px;font-size:17.6px;color:#1c1f24;"><span class="l" style="font-size:18.3px;transform:scaleX(0.959);margin-right:-0.83px">78</span></div>
<div class="t c" style="left:1190.0px;top:594.9px;width:22.5px;height:40px;line-height:40px;font-size:17.6px;color:#1c1f24;"><span class="l" style="font-size:18.3px;transform:scaleX(0.957);margin-right:-0.39px">x</span></div>
<div class="t c" style="left:627.5px;top:594.9px;width:37.5px;height:40px;line-height:40px;font-size:17.6px;color:#1c1f24;"><span class="l" style="font-size:18.3px;transform:scaleX(0.959);margin-right:-0.83px">00</span></div>
<div class="t c" style="left:1212.5px;top:594.9px;width:22.5px;height:40px;line-height:40px;font-size:17.6px;color:#1c1f24;"><span class="l" style="font-size:18.3px;transform:scaleX(0.963);margin-right:-0.19px">.</span></div>
<div class="t c" style="left:665.0px;top:594.9px;width:37.5px;height:40px;line-height:40px;font-size:17.6px;color:#1c1f24;"><span class="l" style="font-size:18.3px;transform:scaleX(0.959);margin-right:-0.83px">00</span></div>
<div class="t c" style="left:1235.0px;top:594.9px;width:22.5px;height:40px;line-height:40px;font-size:17.6px;color:#1c1f24;"><span class="l" style="font-size:18.3px;transform:scaleX(0.963);margin-right:-0.19px">.</span></div>
<div class="t c" style="left:702.5px;top:594.9px;width:37.5px;height:40px;line-height:40px;font-size:17.6px;color:#1c1f24;"><span class="l" style="font-size:18.3px;transform:scaleX(0.869);margin-right:-2.92px">FF</span></div>
<div class="t c" style="left:1257.5px;top:594.9px;width:22.5px;height:40px;line-height:40px;font-size:17.6px;color:#1c1f24;"><span class="l" style="font-size:18.3px;transform:scaleX(0.963);margin-right:-0.19px">.</span></div>
<div class="t c" style="left:740.0px;top:594.9px;width:37.5px;height:40px;line-height:40px;font-size:17.6px;color:#1c1f24;"><span class="l" style="font-size:18.3px;transform:scaleX(0.914);margin-right:-1.92px">A5</span></div>
<div class="t c" style="left:1280.0px;top:594.9px;width:22.5px;height:40px;line-height:40px;font-size:17.6px;color:#1c1f24;"><span class="l" style="font-size:18.3px;transform:scaleX(0.963);margin-right:-0.19px">.</span></div>
<div class="t c" style="left:777.5px;top:594.9px;width:37.5px;height:40px;line-height:40px;font-size:17.6px;color:#1c1f24;"><span class="l" style="font-size:18.3px;transform:scaleX(0.959);margin-right:-0.83px">49</span></div>
<div class="t c" style="left:1302.5px;top:594.9px;width:22.5px;height:40px;line-height:40px;font-size:17.6px;color:#1c1f24;"><span class="l" style="font-size:18.3px;transform:scaleX(1.012);margin-right:0.06px">I</span></div>
<div class="t c" style="left:815.0px;top:594.9px;width:37.5px;height:40px;line-height:40px;font-size:17.6px;color:#1c1f24;"><span class="l" style="font-size:18.3px;transform:scaleX(0.959);margin-right:-0.83px">44</span></div>
<div class="t c" style="left:1325.0px;top:594.9px;width:22.5px;height:40px;line-height:40px;font-size:17.6px;color:#1c1f24;"><span class="l" style="font-size:18.3px;transform:scaleX(0.916);margin-right:-1.11px">D</span></div>
<div class="t c" style="left:852.5px;top:594.9px;width:37.5px;height:40px;line-height:40px;font-size:17.6px;color:#1c1f24;"><span class="l" style="font-size:18.3px;transform:scaleX(0.959);margin-right:-0.83px">41</span></div>
<div class="t c" style="left:1347.5px;top:594.9px;width:22.5px;height:40px;line-height:40px;font-size:17.6px;color:#1c1f24;"><span class="l" style="font-size:18.3px;transform:scaleX(0.876);margin-right:-1.52px">A</span></div>
<div class="t c" style="left:890.0px;top:594.9px;width:37.5px;height:40px;line-height:40px;font-size:17.6px;color:#1c1f24;"><span class="l" style="font-size:18.3px;transform:scaleX(0.959);margin-right:-0.83px">54</span></div>
<div class="t c" style="left:1370.0px;top:594.9px;width:22.5px;height:40px;line-height:40px;font-size:17.6px;color:#1c1f24;"><span class="l" style="font-size:18.3px;transform:scaleX(0.943);margin-right:-0.64px">T</span></div>
<div class="t c" style="left:927.5px;top:594.9px;width:37.5px;height:40px;line-height:40px;font-size:17.6px;color:#1c1f24;"><span class="l" style="font-size:18.3px;transform:scaleX(0.959);margin-right:-0.83px">78</span></div>
<div class="t c" style="left:1392.5px;top:594.9px;width:22.5px;height:40px;line-height:40px;font-size:17.6px;color:#1c1f24;"><span class="l" style="font-size:18.3px;transform:scaleX(0.957);margin-right:-0.39px">x</span></div>
<div class="t c" style="left:965.0px;top:594.9px;width:37.5px;height:40px;line-height:40px;font-size:17.6px;color:#1c1f24;"><span class="l" style="font-size:18.3px;transform:scaleX(0.900);margin-right:-2.25px">5E</span></div>
<div class="t c" style="left:1415.0px;top:594.9px;width:22.5px;height:40px;line-height:40px;font-size:17.6px;color:#1c1f24;"><span class="l" style="font-size:18.3px;transform:scaleX(1.136);margin-right:1.17px">^</span></div>
<div class="t c" style="left:1002.5px;top:594.9px;width:37.5px;height:40px;line-height:40px;font-size:17.6px;color:#1c1f24;"><span class="l" style="font-size:18.3px;transform:scaleX(0.849);margin-right:-3.83px">EC</span></div>
<div class="t c" style="left:1437.5px;top:594.9px;width:22.5px;height:40px;line-height:40px;font-size:17.6px;color:#1c1f24;"><span class="l" style="font-size:18.3px;transform:scaleX(0.963);margin-right:-0.19px">.</span></div>
<div class="t c" style="left:1040.0px;top:594.9px;width:37.5px;height:40px;line-height:40px;font-size:17.6px;color:#1c1f24;"><span class="l" style="font-size:18.3px;transform:scaleX(0.916);margin-right:-2.22px">DD</span></div>
<div class="t c" style="left:1460.0px;top:594.9px;width:22.5px;height:40px;line-height:40px;font-size:17.6px;color:#1c1f24;"><span class="l" style="font-size:18.3px;transform:scaleX(0.963);margin-right:-0.19px">.</span></div>
<div class="t c" style="left:1077.5px;top:594.9px;width:37.5px;height:40px;line-height:40px;font-size:17.6px;color:#1c1f24;"><span class="l" style="font-size:18.3px;transform:scaleX(0.959);margin-right:-0.83px">09</span></div>
<div class="t c" style="left:1482.5px;top:594.9px;width:22.5px;height:40px;line-height:40px;font-size:17.6px;color:#1c1f24;"><span class="l" style="font-size:18.3px;transform:scaleX(0.963);margin-right:-0.19px">.</span></div>
<div class="t c" style="left:391px;top:634.9px;width:114px;height:40px;line-height:40px;font-size:17.6px;color:#1c1f24;"><span class="l" style="font-size:18.3px;transform:scaleX(0.960);margin-right:-3.30px">00000060</span></div>
<div class="t c" style="left:515.0px;top:634.9px;width:37.5px;height:40px;line-height:40px;font-size:17.6px;color:#1c1f24;"><span class="l" style="font-size:18.3px;transform:scaleX(0.959);margin-right:-0.83px">60</span></div>
<div class="t c" style="left:1145.0px;top:634.9px;width:22.5px;height:40px;line-height:40px;font-size:17.6px;color:#1c1f24;"><span class="l" style="font-size:18.3px;transform:scaleX(1.751);margin-right:4.58px">`</span></div>
<div class="t c" style="left:552.5px;top:634.9px;width:37.5px;height:40px;line-height:40px;font-size:17.6px;color:#1c1f24;"><span class="l" style="font-size:18.3px;transform:scaleX(0.898);margin-right:-2.39px">0C</span></div>
<div class="t c" style="left:1167.5px;top:634.9px;width:22.5px;height:40px;line-height:40px;font-size:17.6px;color:#1c1f24;"><span class="l" style="font-size:18.3px;transform:scaleX(0.963);margin-right:-0.19px">.</span></div>
<div class="t c" style="left:590.0px;top:634.9px;width:37.5px;height:40px;line-height:40px;font-size:17.6px;color:#1c1f24;"><span class="l" style="font-size:18.3px;transform:scaleX(0.935);margin-right:-1.52px">D7</span></div>
<div class="t c" style="left:1190.0px;top:634.9px;width:22.5px;height:40px;line-height:40px;font-size:17.6px;color:#1c1f24;"><span class="l" style="font-size:18.3px;transform:scaleX(0.963);margin-right:-0.19px">.</span></div>
<div class="t c" style="left:627.5px;top:634.9px;width:37.5px;height:40px;line-height:40px;font-size:17.6px;color:#1c1f24;"><span class="l" style="font-size:18.3px;transform:scaleX(0.912);margin-right:-1.88px">1F</span></div>
<div class="t c" style="left:1212.5px;top:634.9px;width:22.5px;height:40px;line-height:40px;font-size:17.6px;color:#1c1f24;"><span class="l" style="font-size:18.3px;transform:scaleX(0.963);margin-right:-0.19px">.</span></div>
<div class="t c" style="left:665.0px;top:634.9px;width:37.5px;height:40px;line-height:40px;font-size:17.6px;color:#1c1f24;"><span class="l" style="font-size:18.3px;transform:scaleX(0.959);margin-right:-0.83px">07</span></div>
<div class="t c" style="left:1235.0px;top:634.9px;width:22.5px;height:40px;line-height:40px;font-size:17.6px;color:#1c1f24;"><span class="l" style="font-size:18.3px;transform:scaleX(0.963);margin-right:-0.19px">.</span></div>
<div class="t c" style="left:702.5px;top:634.9px;width:37.5px;height:40px;line-height:40px;font-size:17.6px;color:#1c1f24;"><span class="l" style="font-size:18.3px;transform:scaleX(0.912);margin-right:-1.88px">F0</span></div>
<div class="t c" style="left:1257.5px;top:634.9px;width:22.5px;height:40px;line-height:40px;font-size:17.6px;color:#1c1f24;"><span class="l" style="font-size:18.3px;transform:scaleX(0.963);margin-right:-0.19px">.</span></div>
<div class="t c" style="left:740.0px;top:634.9px;width:37.5px;height:40px;line-height:40px;font-size:17.6px;color:#1c1f24;"><span class="l" style="font-size:18.3px;transform:scaleX(0.912);margin-right:-1.88px">6F</span></div>
<div class="t c" style="left:1280.0px;top:634.9px;width:22.5px;height:40px;line-height:40px;font-size:17.6px;color:#1c1f24;"><span class="l" style="font-size:18.3px;transform:scaleX(1.048);margin-right:0.48px">o</span></div>
<div class="t c" style="left:777.5px;top:634.9px;width:37.5px;height:40px;line-height:40px;font-size:17.6px;color:#1c1f24;"><span class="l" style="font-size:18.3px;transform:scaleX(0.959);margin-right:-0.83px">56</span></div>
<div class="t c" style="left:1302.5px;top:634.9px;width:22.5px;height:40px;line-height:40px;font-size:17.6px;color:#1c1f24;"><span class="l" style="font-size:18.3px;transform:scaleX(0.829);margin-right:-2.09px">V</span></div>
<div class="t c" style="left:815.0px;top:634.9px;width:37.5px;height:40px;line-height:40px;font-size:17.6px;color:#1c1f24;"><span class="l" style="font-size:18.3px;transform:scaleX(0.959);margin-right:-0.83px">88</span></div>
<div class="t c" style="left:1325.0px;top:634.9px;width:22.5px;height:40px;line-height:40px;font-size:17.6px;color:#1c1f24;"><span class="l" style="font-size:18.3px;transform:scaleX(0.963);margin-right:-0.19px">.</span></div>
<div class="t c" style="left:852.5px;top:634.9px;width:37.5px;height:40px;line-height:40px;font-size:17.6px;color:#1c1f24;"><span class="l" style="font-size:18.3px;transform:scaleX(0.959);margin-right:-0.83px">52</span></div>
<div class="t c" style="left:1347.5px;top:634.9px;width:22.5px;height:40px;line-height:40px;font-size:17.6px;color:#1c1f24;"><span class="l" style="font-size:18.3px;transform:scaleX(0.846);margin-right:-2.03px">R</span></div>
<div class="t c" style="left:890.0px;top:634.9px;width:37.5px;height:40px;line-height:40px;font-size:17.6px;color:#1c1f24;"><span class="l" style="font-size:18.3px;transform:scaleX(0.959);margin-right:-0.83px">49</span></div>
<div class="t c" style="left:1370.0px;top:634.9px;width:22.5px;height:40px;line-height:40px;font-size:17.6px;color:#1c1f24;"><span class="l" style="font-size:18.3px;transform:scaleX(1.012);margin-right:0.06px">I</span></div>
<div class="t c" style="left:927.5px;top:634.9px;width:37.5px;height:40px;line-height:40px;font-size:17.6px;color:#1c1f24;"><span class="l" style="font-size:18.3px;transform:scaleX(0.935);margin-right:-1.52px">D1</span></div>
<div class="t c" style="left:1392.5px;top:634.9px;width:22.5px;height:40px;line-height:40px;font-size:17.6px;color:#1c1f24;"><span class="l" style="font-size:18.3px;transform:scaleX(0.963);margin-right:-0.19px">.</span></div>
<div class="t c" style="left:965.0px;top:634.9px;width:37.5px;height:40px;line-height:40px;font-size:17.6px;color:#1c1f24;"><span class="l" style="font-size:18.3px;transform:scaleX(0.959);margin-right:-0.83px">44</span></div>
<div class="t c" style="left:1415.0px;top:634.9px;width:22.5px;height:40px;line-height:40px;font-size:17.6px;color:#1c1f24;"><span class="l" style="font-size:18.3px;transform:scaleX(0.916);margin-right:-1.11px">D</span></div>
<div class="t c" style="left:1002.5px;top:634.9px;width:37.5px;height:40px;line-height:40px;font-size:17.6px;color:#1c1f24;"><span class="l" style="font-size:18.3px;transform:scaleX(0.935);margin-right:-1.52px">1D</span></div>
<div class="t c" style="left:1437.5px;top:634.9px;width:22.5px;height:40px;line-height:40px;font-size:17.6px;color:#1c1f24;"><span class="l" style="font-size:18.3px;transform:scaleX(0.963);margin-right:-0.19px">.</span></div>
<div class="t c" style="left:1040.0px;top:634.9px;width:37.5px;height:40px;line-height:40px;font-size:17.6px;color:#1c1f24;"><span class="l" style="font-size:18.3px;transform:scaleX(0.959);margin-right:-0.83px">89</span></div>
<div class="t c" style="left:1460.0px;top:634.9px;width:22.5px;height:40px;line-height:40px;font-size:17.6px;color:#1c1f24;"><span class="l" style="font-size:18.3px;transform:scaleX(0.963);margin-right:-0.19px">.</span></div>
<div class="t c" style="left:1077.5px;top:634.9px;width:37.5px;height:40px;line-height:40px;font-size:17.6px;color:#1c1f24;"><span class="l" style="font-size:18.3px;transform:scaleX(0.953);margin-right:-1.06px">2B</span></div>
<div class="t c" style="left:1482.5px;top:634.9px;width:22.5px;height:40px;line-height:40px;font-size:17.6px;color:#1c1f24;"><span class="l" style="font-size:18.3px;transform:scaleX(0.914);margin-right:-0.92px">+</span></div>
<div class="t c" style="left:391px;top:674.9px;width:114px;height:40px;line-height:40px;font-size:17.6px;color:#1c1f24;"><span class="l" style="font-size:18.3px;transform:scaleX(0.960);margin-right:-3.30px">00000070</span></div>
<div class="t c" style="left:515.0px;top:674.9px;width:37.5px;height:40px;line-height:40px;font-size:17.6px;color:#1c1f24;"><span class="l" style="font-size:18.3px;transform:scaleX(0.959);margin-right:-0.83px">41</span></div>
<div class="t c" style="left:1145.0px;top:674.9px;width:22.5px;height:40px;line-height:40px;font-size:17.6px;color:#1c1f24;"><span class="l" style="font-size:18.3px;transform:scaleX(0.876);margin-right:-1.52px">A</span></div>
<div class="t c" style="left:552.5px;top:674.9px;width:37.5px;height:40px;line-height:40px;font-size:17.6px;color:#1c1f24;"><span class="l" style="font-size:18.3px;transform:scaleX(0.935);margin-right:-1.52px">9D</span></div>
<div class="t c" style="left:1167.5px;top:674.9px;width:22.5px;height:40px;line-height:40px;font-size:17.6px;color:#1c1f24;"><span class="l" style="font-size:18.3px;transform:scaleX(0.963);margin-right:-0.19px">.</span></div>
<div class="t c" style="left:590.0px;top:674.9px;width:37.5px;height:40px;line-height:40px;font-size:17.6px;color:#1c1f24;"><span class="l" style="font-size:18.3px;transform:scaleX(0.959);margin-right:-0.83px">75</span></div>
<div class="t c" style="left:1190.0px;top:674.9px;width:22.5px;height:40px;line-height:40px;font-size:17.6px;color:#1c1f24;"><span class="l" style="font-size:18.3px;transform:scaleX(1.049);margin-right:0.50px">u</span></div>
<div class="t c" style="left:627.5px;top:674.9px;width:37.5px;height:40px;line-height:40px;font-size:17.6px;color:#1c1f24;"><span class="l" style="font-size:18.3px;transform:scaleX(0.912);margin-right:-1.88px">F6</span></div>
<div class="t c" style="left:1212.5px;top:674.9px;width:22.5px;height:40px;line-height:40px;font-size:17.6px;color:#1c1f24;"><span class="l" style="font-size:18.3px;transform:scaleX(0.963);margin-right:-0.19px">.</span></div>
<div class="t c" style="left:665.0px;top:674.9px;width:37.5px;height:40px;line-height:40px;font-size:17.6px;color:#1c1f24;"><span class="l" style="font-size:18.3px;transform:scaleX(0.912);margin-right:-1.88px">2F</span></div>
<div class="t c" style="left:1235.0px;top:674.9px;width:22.5px;height:40px;line-height:40px;font-size:17.6px;color:#1c1f24;"><span class="l" style="font-size:18.3px;transform:scaleX(1.356);margin-right:1.81px">/</span></div>
<div class="t c" style="left:702.5px;top:674.9px;width:37.5px;height:40px;line-height:40px;font-size:17.6px;color:#1c1f24;"><span class="l" style="font-size:18.3px;transform:scaleX(0.900);margin-right:-2.25px">8E</span></div>
<div class="t c" style="left:1257.5px;top:674.9px;width:22.5px;height:40px;line-height:40px;font-size:17.6px;color:#1c1f24;"><span class="l" style="font-size:18.3px;transform:scaleX(0.963);margin-right:-0.19px">.</span></div>
<div class="t c" style="left:740.0px;top:674.9px;width:37.5px;height:40px;line-height:40px;font-size:17.6px;color:#1c1f24;"><span class="l" style="font-size:18.3px;transform:scaleX(0.959);margin-right:-0.83px">52</span></div>
<div class="t c" style="left:1280.0px;top:674.9px;width:22.5px;height:40px;line-height:40px;font-size:17.6px;color:#1c1f24;"><span class="l" style="font-size:18.3px;transform:scaleX(0.846);margin-right:-2.03px">R</span></div>
<div class="t c" style="left:777.5px;top:674.9px;width:37.5px;height:40px;line-height:40px;font-size:17.6px;color:#1c1f24;"><span class="l" style="font-size:18.3px;transform:scaleX(0.935);margin-right:-1.52px">D4</span></div>
<div class="t c" style="left:1302.5px;top:674.9px;width:22.5px;height:40px;line-height:40px;font-size:17.6px;color:#1c1f24;"><span class="l" style="font-size:18.3px;transform:scaleX(0.963);margin-right:-0.19px">.</span></div>
<div class="t c" style="left:815.0px;top:674.9px;width:37.5px;height:40px;line-height:40px;font-size:17.6px;color:#1c1f24;"><span class="l" style="font-size:18.3px;transform:scaleX(0.959);margin-right:-0.83px">55</span></div>
<div class="t c" style="left:1325.0px;top:674.9px;width:22.5px;height:40px;line-height:40px;font-size:17.6px;color:#1c1f24;"><span class="l" style="font-size:18.3px;transform:scaleX(0.960);margin-right:-0.53px">U</span></div>
<div class="t c" style="left:852.5px;top:674.9px;width:37.5px;height:40px;line-height:40px;font-size:17.6px;color:#1c1f24;"><span class="l" style="font-size:18.3px;transform:scaleX(0.959);margin-right:-0.83px">75</span></div>
<div class="t c" style="left:1347.5px;top:674.9px;width:22.5px;height:40px;line-height:40px;font-size:17.6px;color:#1c1f24;"><span class="l" style="font-size:18.3px;transform:scaleX(1.049);margin-right:0.50px">u</span></div>
<div class="t c" style="left:890.0px;top:674.9px;width:37.5px;height:40px;line-height:40px;font-size:17.6px;color:#1c1f24;"><span class="l" style="font-size:18.3px;transform:scaleX(0.959);margin-right:-0.83px">53</span></div>
<div class="t c" style="left:1370.0px;top:674.9px;width:22.5px;height:40px;line-height:40px;font-size:17.6px;color:#1c1f24;"><span class="l" style="font-size:18.3px;transform:scaleX(0.859);margin-right:-1.72px">S</span></div>
<div class="t c" style="left:927.5px;top:674.9px;width:37.5px;height:40px;line-height:40px;font-size:17.6px;color:#1c1f24;"><span class="l" style="font-size:18.3px;transform:scaleX(0.959);margin-right:-0.83px">14</span></div>
<div class="t c" style="left:1392.5px;top:674.9px;width:22.5px;height:40px;line-height:40px;font-size:17.6px;color:#1c1f24;"><span class="l" style="font-size:18.3px;transform:scaleX(0.963);margin-right:-0.19px">.</span></div>
<div class="t c" style="left:965.0px;top:674.9px;width:37.5px;height:40px;line-height:40px;font-size:17.6px;color:#1c1f24;"><span class="l" style="font-size:18.3px;transform:scaleX(0.959);margin-right:-0.83px">75</span></div>
<div class="t c" style="left:1415.0px;top:674.9px;width:22.5px;height:40px;line-height:40px;font-size:17.6px;color:#1c1f24;"><span class="l" style="font-size:18.3px;transform:scaleX(1.049);margin-right:0.50px">u</span></div>
<div class="t c" style="left:1002.5px;top:674.9px;width:37.5px;height:40px;line-height:40px;font-size:17.6px;color:#1c1f24;"><span class="l" style="font-size:18.3px;transform:scaleX(0.912);margin-right:-1.88px">5F</span></div>
<div class="t c" style="left:1437.5px;top:674.9px;width:22.5px;height:40px;line-height:40px;font-size:17.6px;color:#1c1f24;"><span class="l" style="font-size:18.3px;transform:scaleX(0.966);margin-right:-0.34px">_</span></div>
<div class="t c" style="left:1040.0px;top:674.9px;width:37.5px;height:40px;line-height:40px;font-size:17.6px;color:#1c1f24;"><span class="l" style="font-size:18.3px;transform:scaleX(0.959);margin-right:-0.83px">71</span></div>
<div class="t c" style="left:1460.0px;top:674.9px;width:22.5px;height:40px;line-height:40px;font-size:17.6px;color:#1c1f24;"><span class="l" style="font-size:18.3px;transform:scaleX(1.072);margin-right:0.73px">q</span></div>
<div class="t c" style="left:1077.5px;top:674.9px;width:37.5px;height:40px;line-height:40px;font-size:17.6px;color:#1c1f24;"><span class="l" style="font-size:18.3px;transform:scaleX(0.959);margin-right:-0.83px">95</span></div>
<div class="t c" style="left:1482.5px;top:674.9px;width:22.5px;height:40px;line-height:40px;font-size:17.6px;color:#1c1f24;"><span class="l" style="font-size:18.3px;transform:scaleX(0.963);margin-right:-0.19px">.</span></div>
<div class="t c" style="left:391px;top:714.9px;width:114px;height:40px;line-height:40px;font-size:17.6px;color:#1c1f24;"><span class="l" style="font-size:18.3px;transform:scaleX(0.960);margin-right:-3.30px">00000080</span></div>
<div class="t c" style="left:515.0px;top:714.9px;width:37.5px;height:40px;line-height:40px;font-size:17.6px;color:#1c1f24;"><span class="l" style="font-size:18.3px;transform:scaleX(0.898);margin-right:-2.39px">C6</span></div>
<div class="t c" style="left:1145.0px;top:714.9px;width:22.5px;height:40px;line-height:40px;font-size:17.6px;color:#1c1f24;"><span class="l" style="font-size:18.3px;transform:scaleX(0.963);margin-right:-0.19px">.</span></div>
<div class="t c" style="left:552.5px;top:714.9px;width:37.5px;height:40px;line-height:40px;font-size:17.6px;color:#1c1f24;"><span class="l" style="font-size:18.3px;transform:scaleX(0.935);margin-right:-1.52px">7D</span></div>
<div class="t c" style="left:1167.5px;top:714.9px;width:22.5px;height:40px;line-height:40px;font-size:17.6px;color:#1c1f24;"><span class="l" style="font-size:18.3px;transform:scaleX(0.972);margin-right:-0.17px">}</span></div>
<div class="t c" style="left:590.0px;top:714.9px;width:37.5px;height:40px;line-height:40px;font-size:17.6px;color:#1c1f24;"><span class="l" style="font-size:18.3px;transform:scaleX(0.935);margin-right:-1.52px">D4</span></div>
<div class="t c" style="left:1190.0px;top:714.9px;width:22.5px;height:40px;line-height:40px;font-size:17.6px;color:#1c1f24;"><span class="l" style="font-size:18.3px;transform:scaleX(0.963);margin-right:-0.19px">.</span></div>
<div class="t c" style="left:627.5px;top:714.9px;width:37.5px;height:40px;line-height:40px;font-size:17.6px;color:#1c1f24;"><span class="l" style="font-size:18.3px;transform:scaleX(0.959);margin-right:-0.83px">59</span></div>
<div class="t c" style="left:1212.5px;top:714.9px;width:22.5px;height:40px;line-height:40px;font-size:17.6px;color:#1c1f24;"><span class="l" style="font-size:18.3px;transform:scaleX(0.765);margin-right:-2.88px">Y</span></div>
<div class="t c" style="left:665.0px;top:714.9px;width:37.5px;height:40px;line-height:40px;font-size:17.6px;color:#1c1f24;"><span class="l" style="font-size:18.3px;transform:scaleX(0.914);margin-right:-1.92px">4A</span></div>
<div class="t c" style="left:1235.0px;top:714.9px;width:22.5px;height:40px;line-height:40px;font-size:17.6px;color:#1c1f24;"><span class="l" style="font-size:18.3px;transform:scaleX(1.029);margin-right:0.27px">J</span></div>
<div class="t c" style="left:702.5px;top:714.9px;width:37.5px;height:40px;line-height:40px;font-size:17.6px;color:#1c1f24;"><span class="l" style="font-size:18.3px;transform:scaleX(0.953);margin-right:-1.06px">4B</span></div>
<div class="t c" style="left:1257.5px;top:714.9px;width:22.5px;height:40px;line-height:40px;font-size:17.6px;color:#1c1f24;"><span class="l" style="font-size:18.3px;transform:scaleX(0.931);margin-right:-0.84px">K</span></div>
<div class="t c" style="left:740.0px;top:714.9px;width:37.5px;height:40px;line-height:40px;font-size:17.6px;color:#1c1f24;"><span class="l" style="font-size:18.3px;transform:scaleX(0.912);margin-right:-2.16px">AB</span></div>
<div class="t c" style="left:1280.0px;top:714.9px;width:22.5px;height:40px;line-height:40px;font-size:17.6px;color:#1c1f24;"><span class="l" style="font-size:18.3px;transform:scaleX(0.963);margin-right:-0.19px">.</span></div>
<div class="t c" style="left:777.5px;top:714.9px;width:37.5px;height:40px;line-height:40px;font-size:17.6px;color:#1c1f24;"><span class="l" style="font-size:18.3px;transform:scaleX(0.935);margin-right:-1.52px">D4</span></div>
<div class="t c" style="left:1302.5px;top:714.9px;width:22.5px;height:40px;line-height:40px;font-size:17.6px;color:#1c1f24;"><span class="l" style="font-size:18.3px;transform:scaleX(0.963);margin-right:-0.19px">.</span></div>
<div class="t c" style="left:815.0px;top:714.9px;width:37.5px;height:40px;line-height:40px;font-size:17.6px;color:#1c1f24;"><span class="l" style="font-size:18.3px;transform:scaleX(0.935);margin-right:-1.52px">7D</span></div>
<div class="t c" style="left:1325.0px;top:714.9px;width:22.5px;height:40px;line-height:40px;font-size:17.6px;color:#1c1f24;"><span class="l" style="font-size:18.3px;transform:scaleX(0.972);margin-right:-0.17px">}</span></div>
<div class="t c" style="left:852.5px;top:714.9px;width:37.5px;height:40px;line-height:40px;font-size:17.6px;color:#1c1f24;"><span class="l" style="font-size:18.3px;transform:scaleX(0.959);margin-right:-0.83px">53</span></div>
<div class="t c" style="left:1347.5px;top:714.9px;width:22.5px;height:40px;line-height:40px;font-size:17.6px;color:#1c1f24;"><span class="l" style="font-size:18.3px;transform:scaleX(0.859);margin-right:-1.72px">S</span></div>
<div class="t c" style="left:890.0px;top:714.9px;width:37.5px;height:40px;line-height:40px;font-size:17.6px;color:#1c1f24;"><span class="l" style="font-size:18.3px;transform:scaleX(0.935);margin-right:-1.52px">D4</span></div>
<div class="t c" style="left:1370.0px;top:714.9px;width:22.5px;height:40px;line-height:40px;font-size:17.6px;color:#1c1f24;"><span class="l" style="font-size:18.3px;transform:scaleX(0.963);margin-right:-0.19px">.</span></div>
<div class="t c" style="left:927.5px;top:714.9px;width:37.5px;height:40px;line-height:40px;font-size:17.6px;color:#1c1f24;"><span class="l" style="font-size:18.3px;transform:scaleX(0.959);margin-right:-0.83px">59</span></div>
<div class="t c" style="left:1392.5px;top:714.9px;width:22.5px;height:40px;line-height:40px;font-size:17.6px;color:#1c1f24;"><span class="l" style="font-size:18.3px;transform:scaleX(0.765);margin-right:-2.88px">Y</span></div>
<div class="t c" style="left:965.0px;top:714.9px;width:37.5px;height:40px;line-height:40px;font-size:17.6px;color:#1c1f24;"><span class="l" style="font-size:18.3px;transform:scaleX(0.959);margin-right:-0.83px">67</span></div>
<div class="t c" style="left:1415.0px;top:714.9px;width:22.5px;height:40px;line-height:40px;font-size:17.6px;color:#1c1f24;"><span class="l" style="font-size:18.3px;transform:scaleX(0.975);margin-right:-0.25px">g</span></div>
<div class="t c" style="left:1002.5px;top:714.9px;width:37.5px;height:40px;line-height:40px;font-size:17.6px;color:#1c1f24;"><span class="l" style="font-size:18.3px;transform:scaleX(0.959);margin-right:-0.83px">85</span></div>
<div class="t c" style="left:1437.5px;top:714.9px;width:22.5px;height:40px;line-height:40px;font-size:17.6px;color:#1c1f24;"><span class="l" style="font-size:18.3px;transform:scaleX(0.963);margin-right:-0.19px">.</span></div>
<div class="t c" style="left:1040.0px;top:714.9px;width:37.5px;height:40px;line-height:40px;font-size:17.6px;color:#1c1f24;"><span class="l" style="font-size:18.3px;transform:scaleX(0.914);margin-right:-1.92px">A8</span></div>
<div class="t c" style="left:1460.0px;top:714.9px;width:22.5px;height:40px;line-height:40px;font-size:17.6px;color:#1c1f24;"><span class="l" style="font-size:18.3px;transform:scaleX(0.963);margin-right:-0.19px">.</span></div>
<div class="t c" style="left:1077.5px;top:714.9px;width:37.5px;height:40px;line-height:40px;font-size:17.6px;color:#1c1f24;"><span class="l" style="font-size:18.3px;transform:scaleX(0.959);margin-right:-0.83px">23</span></div>
<div class="t c" style="left:1482.5px;top:714.9px;width:22.5px;height:40px;line-height:40px;font-size:17.6px;color:#1c1f24;"><span class="l" style="font-size:18.3px;transform:scaleX(0.959);margin-right:-0.42px">#</span></div>
<div class="t c" style="left:391px;top:754.9px;width:114px;height:40px;line-height:40px;font-size:17.6px;color:#1c1f24;"><span class="l" style="font-size:18.3px;transform:scaleX(0.960);margin-right:-3.30px">00000090</span></div>
<div class="t c" style="left:515.0px;top:754.9px;width:37.5px;height:40px;line-height:40px;font-size:17.6px;color:#1c1f24;"><span class="l" style="font-size:18.3px;transform:scaleX(0.935);margin-right:-1.52px">D4</span></div>
<div class="t c" style="left:1145.0px;top:754.9px;width:22.5px;height:40px;line-height:40px;font-size:17.6px;color:#1c1f24;"><span class="l" style="font-size:18.3px;transform:scaleX(0.963);margin-right:-0.19px">.</span></div>
<div class="t c" style="left:552.5px;top:754.9px;width:37.5px;height:40px;line-height:40px;font-size:17.6px;color:#1c1f24;"><span class="l" style="font-size:18.3px;transform:scaleX(0.959);margin-right:-0.83px">59</span></div>
<div class="t c" style="left:1167.5px;top:754.9px;width:22.5px;height:40px;line-height:40px;font-size:17.6px;color:#1c1f24;"><span class="l" style="font-size:18.3px;transform:scaleX(0.765);margin-right:-2.88px">Y</span></div>
<div class="t c" style="left:590.0px;top:754.9px;width:37.5px;height:40px;line-height:40px;font-size:17.6px;color:#1c1f24;"><span class="l" style="font-size:18.3px;transform:scaleX(0.959);margin-right:-0.83px">25</span></div>
<div class="t c" style="left:1190.0px;top:754.9px;width:22.5px;height:40px;line-height:40px;font-size:17.6px;color:#1c1f24;"><span class="l" style="font-size:18.3px;">%</span></div>
<div class="t c" style="left:627.5px;top:754.9px;width:37.5px;height:40px;line-height:40px;font-size:17.6px;color:#1c1f24;"><span class="l" style="font-size:18.3px;transform:scaleX(0.862);margin-right:-3.36px">AE</span></div>
<div class="t c" style="left:1212.5px;top:754.9px;width:22.5px;height:40px;line-height:40px;font-size:17.6px;color:#1c1f24;"><span class="l" style="font-size:18.3px;transform:scaleX(0.963);margin-right:-0.19px">.</span></div>
<div class="t c" style="left:665.0px;top:754.9px;width:37.5px;height:40px;line-height:40px;font-size:17.6px;color:#1c1f24;"><span class="l" style="font-size:18.3px;transform:scaleX(0.959);margin-right:-0.83px">84</span></div>
<div class="t c" style="left:1235.0px;top:754.9px;width:22.5px;height:40px;line-height:40px;font-size:17.6px;color:#1c1f24;"><span class="l" style="font-size:18.3px;transform:scaleX(0.963);margin-right:-0.19px">.</span></div>
<div class="t c" style="left:702.5px;top:754.9px;width:37.5px;height:40px;line-height:40px;font-size:17.6px;color:#1c1f24;"><span class="l" style="font-size:18.3px;transform:scaleX(0.959);margin-right:-0.83px">94</span></div>
<div class="t c" style="left:1257.5px;top:754.9px;width:22.5px;height:40px;line-height:40px;font-size:17.6px;color:#1c1f24;"><span class="l" style="font-size:18.3px;transform:scaleX(0.963);margin-right:-0.19px">.</span></div>
<div class="t c" style="left:740.0px;top:754.9px;width:37.5px;height:40px;line-height:40px;font-size:17.6px;color:#1c1f24;"><span class="l" style="font-size:18.3px;transform:scaleX(0.959);margin-right:-0.83px">50</span></div>
<div class="t c" style="left:1280.0px;top:754.9px;width:22.5px;height:40px;line-height:40px;font-size:17.6px;color:#1c1f24;"><span class="l" style="font-size:18.3px;transform:scaleX(0.912);margin-right:-1.08px">P</span></div>
<div class="t c" style="left:777.5px;top:754.9px;width:37.5px;height:40px;line-height:40px;font-size:17.6px;color:#1c1f24;"><span class="l" style="font-size:18.3px;transform:scaleX(0.959);margin-right:-0.83px">24</span></div>
<div class="t c" style="left:1302.5px;top:754.9px;width:22.5px;height:40px;line-height:40px;font-size:17.6px;color:#1c1f24;"><span class="l" style="font-size:18.3px;transform:scaleX(0.959);margin-right:-0.42px">$</span></div>
<div class="t c" style="left:815.0px;top:754.9px;width:37.5px;height:40px;line-height:40px;font-size:17.6px;color:#1c1f24;"><span class="l" style="font-size:18.3px;transform:scaleX(0.959);margin-right:-0.83px">45</span></div>
<div class="t c" style="left:1325.0px;top:754.9px;width:22.5px;height:40px;line-height:40px;font-size:17.6px;color:#1c1f24;"><span class="l" style="font-size:18.3px;transform:scaleX(0.849);margin-right:-1.84px">E</span></div>
<div class="t c" style="left:852.5px;top:754.9px;width:37.5px;height:40px;line-height:40px;font-size:17.6px;color:#1c1f24;"><span class="l" style="font-size:18.3px;transform:scaleX(0.953);margin-right:-1.06px">B3</span></div>
<div class="t c" style="left:1347.5px;top:754.9px;width:22.5px;height:40px;line-height:40px;font-size:17.6px;color:#1c1f24;"><span class="l" style="font-size:18.3px;transform:scaleX(0.963);margin-right:-0.19px">.</span></div>
<div class="t c" style="left:890.0px;top:754.9px;width:37.5px;height:40px;line-height:40px;font-size:17.6px;color:#1c1f24;"><span class="l" style="font-size:18.3px;transform:scaleX(0.959);margin-right:-0.83px">84</span></div>
<div class="t c" style="left:1370.0px;top:754.9px;width:22.5px;height:40px;line-height:40px;font-size:17.6px;color:#1c1f24;"><span class="l" style="font-size:18.3px;transform:scaleX(0.963);margin-right:-0.19px">.</span></div>
<div class="t c" style="left:927.5px;top:754.9px;width:37.5px;height:40px;line-height:40px;font-size:17.6px;color:#1c1f24;"><span class="l" style="font-size:18.3px;transform:scaleX(0.855);margin-right:-3.69px">AC</span></div>
<div class="t c" style="left:1392.5px;top:754.9px;width:22.5px;height:40px;line-height:40px;font-size:17.6px;color:#1c1f24;"><span class="l" style="font-size:18.3px;transform:scaleX(0.963);margin-right:-0.19px">.</span></div>
<div class="t c" style="left:965.0px;top:754.9px;width:37.5px;height:40px;line-height:40px;font-size:17.6px;color:#1c1f24;"><span class="l" style="font-size:18.3px;transform:scaleX(0.959);margin-right:-0.83px">92</span></div>
<div class="t c" style="left:1415.0px;top:754.9px;width:22.5px;height:40px;line-height:40px;font-size:17.6px;color:#1c1f24;"><span class="l" style="font-size:18.3px;transform:scaleX(0.963);margin-right:-0.19px">.</span></div>
<div class="t c" style="left:1002.5px;top:754.9px;width:37.5px;height:40px;line-height:40px;font-size:17.6px;color:#1c1f24;"><span class="l" style="font-size:18.3px;transform:scaleX(0.895);margin-right:-2.56px">FD</span></div>
<div class="t c" style="left:1437.5px;top:754.9px;width:22.5px;height:40px;line-height:40px;font-size:17.6px;color:#1c1f24;"><span class="l" style="font-size:18.3px;transform:scaleX(0.963);margin-right:-0.19px">.</span></div>
<div class="t c" style="left:1040.0px;top:754.9px;width:37.5px;height:40px;line-height:40px;font-size:17.6px;color:#1c1f24;"><span class="l" style="font-size:18.3px;transform:scaleX(0.858);margin-right:-3.45px">CF</span></div>
<div class="t c" style="left:1460.0px;top:754.9px;width:22.5px;height:40px;line-height:40px;font-size:17.6px;color:#1c1f24;"><span class="l" style="font-size:18.3px;transform:scaleX(0.963);margin-right:-0.19px">.</span></div>
<div class="t c" style="left:1077.5px;top:754.9px;width:37.5px;height:40px;line-height:40px;font-size:17.6px;color:#1c1f24;"><span class="l" style="font-size:18.3px;transform:scaleX(0.953);margin-right:-1.06px">9B</span></div>
<div class="t c" style="left:1482.5px;top:754.9px;width:22.5px;height:40px;line-height:40px;font-size:17.6px;color:#1c1f24;"><span class="l" style="font-size:18.3px;transform:scaleX(0.963);margin-right:-0.19px">.</span></div>
<div class="t c" style="left:391px;top:794.9px;width:114px;height:40px;line-height:40px;font-size:17.6px;color:#1c1f24;"><span class="l" style="font-size:18.3px;transform:scaleX(0.948);margin-right:-4.38px">000000A0</span></div>
<div class="t c" style="left:515.0px;top:794.9px;width:37.5px;height:40px;line-height:40px;font-size:17.6px;color:#1c1f24;"><span class="l" style="font-size:18.3px;transform:scaleX(0.959);margin-right:-0.83px">79</span></div>
<div class="t c" style="left:1145.0px;top:794.9px;width:22.5px;height:40px;line-height:40px;font-size:17.6px;color:#1c1f24;"><span class="l" style="font-size:18.3px;">y</span></div>
<div class="t c" style="left:552.5px;top:794.9px;width:37.5px;height:40px;line-height:40px;font-size:17.6px;color:#1c1f24;"><span class="l" style="font-size:18.3px;transform:scaleX(0.953);margin-right:-1.06px">9B</span></div>
<div class="t c" style="left:1167.5px;top:794.9px;width:22.5px;height:40px;line-height:40px;font-size:17.6px;color:#1c1f24;"><span class="l" style="font-size:18.3px;transform:scaleX(0.963);margin-right:-0.19px">.</span></div>
<div class="t c" style="left:590.0px;top:794.9px;width:37.5px;height:40px;line-height:40px;font-size:17.6px;color:#1c1f24;"><span class="l" style="font-size:18.3px;transform:scaleX(0.898);margin-right:-2.39px">6C</span></div>
<div class="t c" style="left:1190.0px;top:794.9px;width:22.5px;height:40px;line-height:40px;font-size:17.6px;color:#1c1f24;"><span class="l" style="font-size:18.3px;transform:scaleX(1.226);margin-right:0.92px">l</span></div>
<div class="t c" style="left:627.5px;top:794.9px;width:37.5px;height:40px;line-height:40px;font-size:17.6px;color:#1c1f24;"><span class="l" style="font-size:18.3px;transform:scaleX(0.959);margin-right:-0.83px">36</span></div>
<div class="t c" style="left:1212.5px;top:794.9px;width:22.5px;height:40px;line-height:40px;font-size:17.6px;color:#1c1f24;"><span class="l" style="font-size:18.3px;transform:scaleX(0.959);margin-right:-0.42px">6</span></div>
<div class="t c" style="left:665.0px;top:794.9px;width:37.5px;height:40px;line-height:40px;font-size:17.6px;color:#1c1f24;"><span class="l" style="font-size:18.3px;transform:scaleX(0.953);margin-right:-1.06px">9B</span></div>
<div class="t c" style="left:1235.0px;top:794.9px;width:22.5px;height:40px;line-height:40px;font-size:17.6px;color:#1c1f24;"><span class="l" style="font-size:18.3px;transform:scaleX(0.963);margin-right:-0.19px">.</span></div>
<div class="t c" style="left:702.5px;top:794.9px;width:37.5px;height:40px;line-height:40px;font-size:17.6px;color:#1c1f24;"><span class="l" style="font-size:18.3px;transform:scaleX(0.953);margin-right:-1.06px">3B</span></div>
<div class="t c" style="left:1257.5px;top:794.9px;width:22.5px;height:40px;line-height:40px;font-size:17.6px;color:#1c1f24;"><span class="l" style="font-size:18.3px;transform:scaleX(0.963);margin-right:-0.19px">;</span></div>
<div class="t c" style="left:740.0px;top:794.9px;width:37.5px;height:40px;line-height:40px;font-size:17.6px;color:#1c1f24;"><span class="l" style="font-size:18.3px;transform:scaleX(0.935);margin-right:-1.52px">D1</span></div>
<div class="t c" style="left:1280.0px;top:794.9px;width:22.5px;height:40px;line-height:40px;font-size:17.6px;color:#1c1f24;"><span class="l" style="font-size:18.3px;transform:scaleX(0.963);margin-right:-0.19px">.</span></div>
<div class="t c" style="left:777.5px;top:794.9px;width:37.5px;height:40px;line-height:40px;font-size:17.6px;color:#1c1f24;"><span class="l" style="font-size:18.3px;transform:scaleX(0.898);margin-right:-2.39px">6C</span></div>
<div class="t c" style="left:1302.5px;top:794.9px;width:22.5px;height:40px;line-height:40px;font-size:17.6px;color:#1c1f24;"><span class="l" style="font-size:18.3px;transform:scaleX(1.226);margin-right:0.92px">l</span></div>
<div class="t c" style="left:815.0px;top:794.9px;width:37.5px;height:40px;line-height:40px;font-size:17.6px;color:#1c1f24;"><span class="l" style="font-size:18.3px;transform:scaleX(0.912);margin-right:-1.88px">F2</span></div>
<div class="t c" style="left:1325.0px;top:794.9px;width:22.5px;height:40px;line-height:40px;font-size:17.6px;color:#1c1f24;"><span class="l" style="font-size:18.3px;transform:scaleX(0.963);margin-right:-0.19px">.</span></div>
<div class="t c" style="left:852.5px;top:794.9px;width:37.5px;height:40px;line-height:40px;font-size:17.6px;color:#1c1f24;"><span class="l" style="font-size:18.3px;transform:scaleX(0.895);margin-right:-2.56px">FD</span></div>
<div class="t c" style="left:1347.5px;top:794.9px;width:22.5px;height:40px;line-height:40px;font-size:17.6px;color:#1c1f24;"><span class="l" style="font-size:18.3px;transform:scaleX(0.963);margin-right:-0.19px">.</span></div>
<div class="t c" style="left:890.0px;top:794.9px;width:37.5px;height:40px;line-height:40px;font-size:17.6px;color:#1c1f24;"><span class="l" style="font-size:18.3px;transform:scaleX(0.953);margin-right:-1.06px">B4</span></div>
<div class="t c" style="left:1370.0px;top:794.9px;width:22.5px;height:40px;line-height:40px;font-size:17.6px;color:#1c1f24;"><span class="l" style="font-size:18.3px;transform:scaleX(0.963);margin-right:-0.19px">.</span></div>
<div class="t c" style="left:927.5px;top:794.9px;width:37.5px;height:40px;line-height:40px;font-size:17.6px;color:#1c1f24;"><span class="l" style="font-size:18.3px;transform:scaleX(0.858);margin-right:-3.45px">CF</span></div>
<div class="t c" style="left:1392.5px;top:794.9px;width:22.5px;height:40px;line-height:40px;font-size:17.6px;color:#1c1f24;"><span class="l" style="font-size:18.3px;transform:scaleX(0.963);margin-right:-0.19px">.</span></div>
<div class="t c" style="left:965.0px;top:794.9px;width:37.5px;height:40px;line-height:40px;font-size:17.6px;color:#1c1f24;"><span class="l" style="font-size:18.3px;transform:scaleX(0.828);margin-right:-4.55px">CC</span></div>
<div class="t c" style="left:1415.0px;top:794.9px;width:22.5px;height:40px;line-height:40px;font-size:17.6px;color:#1c1f24;"><span class="l" style="font-size:18.3px;transform:scaleX(0.963);margin-right:-0.19px">.</span></div>
<div class="t c" style="left:1002.5px;top:794.9px;width:37.5px;height:40px;line-height:40px;font-size:17.6px;color:#1c1f24;"><span class="l" style="font-size:18.3px;transform:scaleX(0.953);margin-right:-1.06px">7B</span></div>
<div class="t c" style="left:1437.5px;top:794.9px;width:22.5px;height:40px;line-height:40px;font-size:17.6px;color:#1c1f24;"><span class="l" style="font-size:18.3px;transform:scaleX(0.972);margin-right:-0.17px">{</span></div>
<div class="t c" style="left:1040.0px;top:794.9px;width:37.5px;height:40px;line-height:40px;font-size:17.6px;color:#1c1f24;"><span class="l" style="font-size:18.3px;transform:scaleX(0.912);margin-right:-1.88px">F3</span></div>
<div class="t c" style="left:1460.0px;top:794.9px;width:22.5px;height:40px;line-height:40px;font-size:17.6px;color:#1c1f24;"><span class="l" style="font-size:18.3px;transform:scaleX(0.963);margin-right:-0.19px">.</span></div>
<div class="t c" style="left:1077.5px;top:794.9px;width:37.5px;height:40px;line-height:40px;font-size:17.6px;color:#1c1f24;"><span class="l" style="font-size:18.3px;transform:scaleX(0.900);margin-right:-2.25px">E6</span></div>
<div class="t c" style="left:1482.5px;top:794.9px;width:22.5px;height:40px;line-height:40px;font-size:17.6px;color:#1c1f24;"><span class="l" style="font-size:18.3px;transform:scaleX(0.963);margin-right:-0.19px">.</span></div>
<div class="t c" style="left:391px;top:834.9px;width:114px;height:40px;line-height:40px;font-size:17.6px;color:#1c1f24;"><span class="l" style="font-size:18.3px;transform:scaleX(0.958);margin-right:-3.52px">000000B0</span></div>
<div class="t c" style="left:515.0px;top:834.9px;width:37.5px;height:40px;line-height:40px;font-size:17.6px;color:#1c1f24;"><span class="l" style="font-size:18.3px;transform:scaleX(0.883);margin-right:-3.09px">CD</span></div>
<div class="t c" style="left:1145.0px;top:834.9px;width:22.5px;height:40px;line-height:40px;font-size:17.6px;color:#1c1f24;"><span class="l" style="font-size:18.3px;transform:scaleX(0.963);margin-right:-0.19px">.</span></div>
<div class="t c" style="left:552.5px;top:834.9px;width:37.5px;height:40px;line-height:40px;font-size:17.6px;color:#1c1f24;"><span class="l" style="font-size:18.3px;transform:scaleX(0.849);margin-right:-3.83px">EC</span></div>
<div class="t c" style="left:1167.5px;top:834.9px;width:22.5px;height:40px;line-height:40px;font-size:17.6px;color:#1c1f24;"><span class="l" style="font-size:18.3px;transform:scaleX(0.963);margin-right:-0.19px">.</span></div>
<div class="t c" style="left:590.0px;top:834.9px;width:37.5px;height:40px;line-height:40px;font-size:17.6px;color:#1c1f24;"><span class="l" style="font-size:18.3px;transform:scaleX(0.849);margin-right:-3.83px">CE</span></div>
<div class="t c" style="left:1190.0px;top:834.9px;width:22.5px;height:40px;line-height:40px;font-size:17.6px;color:#1c1f24;"><span class="l" style="font-size:18.3px;transform:scaleX(0.963);margin-right:-0.19px">.</span></div>
<div class="t c" style="left:627.5px;top:834.9px;width:37.5px;height:40px;line-height:40px;font-size:17.6px;color:#1c1f24;"><span class="l" style="font-size:18.3px;transform:scaleX(0.959);margin-right:-0.83px">66</span></div>
<div class="t c" style="left:1212.5px;top:834.9px;width:22.5px;height:40px;line-height:40px;font-size:17.6px;color:#1c1f24;"><span class="l" style="font-size:18.3px;transform:scaleX(1.123);margin-right:0.62px">f</span></div>
<div class="t c" style="left:665.0px;top:834.9px;width:37.5px;height:40px;line-height:40px;font-size:17.6px;color:#1c1f24;"><span class="l" style="font-size:18.3px;transform:scaleX(0.959);margin-right:-0.83px">67</span></div>
<div class="t c" style="left:1235.0px;top:834.9px;width:22.5px;height:40px;line-height:40px;font-size:17.6px;color:#1c1f24;"><span class="l" style="font-size:18.3px;transform:scaleX(0.975);margin-right:-0.25px">g</span></div>
<div class="t c" style="left:702.5px;top:834.9px;width:37.5px;height:40px;line-height:40px;font-size:17.6px;color:#1c1f24;"><span class="l" style="font-size:18.3px;transform:scaleX(0.959);margin-right:-0.83px">93</span></div>
<div class="t c" style="left:1257.5px;top:834.9px;width:22.5px;height:40px;line-height:40px;font-size:17.6px;color:#1c1f24;"><span class="l" style="font-size:18.3px;transform:scaleX(0.963);margin-right:-0.19px">.</span></div>
<div class="t c" style="left:740.0px;top:834.9px;width:37.5px;height:40px;line-height:40px;font-size:17.6px;color:#1c1f24;"><span class="l" style="font-size:18.3px;transform:scaleX(0.895);margin-right:-2.56px">DF</span></div>
<div class="t c" style="left:1280.0px;top:834.9px;width:22.5px;height:40px;line-height:40px;font-size:17.6px;color:#1c1f24;"><span class="l" style="font-size:18.3px;transform:scaleX(0.963);margin-right:-0.19px">.</span></div>
<div class="t c" style="left:777.5px;top:834.9px;width:37.5px;height:40px;line-height:40px;font-size:17.6px;color:#1c1f24;"><span class="l" style="font-size:18.3px;transform:scaleX(0.898);margin-right:-2.48px">BE</span></div>
<div class="t c" style="left:1302.5px;top:834.9px;width:22.5px;height:40px;line-height:40px;font-size:17.6px;color:#1c1f24;"><span class="l" style="font-size:18.3px;transform:scaleX(0.963);margin-right:-0.19px">.</span></div>
<div class="t c" style="left:815.0px;top:834.9px;width:37.5px;height:40px;line-height:40px;font-size:17.6px;color:#1c1f24;"><span class="l" style="font-size:18.3px;transform:scaleX(0.912);margin-right:-1.88px">F7</span></div>
<div class="t c" style="left:1325.0px;top:834.9px;width:22.5px;height:40px;line-height:40px;font-size:17.6px;color:#1c1f24;"><span class="l" style="font-size:18.3px;transform:scaleX(0.963);margin-right:-0.19px">.</span></div>
<div class="t c" style="left:852.5px;top:834.9px;width:37.5px;height:40px;line-height:40px;font-size:17.6px;color:#1c1f24;"><span class="l" style="font-size:18.3px;transform:scaleX(0.849);margin-right:-3.83px">EC</span></div>
<div class="t c" style="left:1347.5px;top:834.9px;width:22.5px;height:40px;line-height:40px;font-size:17.6px;color:#1c1f24;"><span class="l" style="font-size:18.3px;transform:scaleX(0.963);margin-right:-0.19px">.</span></div>
<div class="t c" style="left:890.0px;top:834.9px;width:37.5px;height:40px;line-height:40px;font-size:17.6px;color:#1c1f24;"><span class="l" style="font-size:18.3px;transform:scaleX(0.914);margin-right:-1.92px">5A</span></div>
<div class="t c" style="left:1370.0px;top:834.9px;width:22.5px;height:40px;line-height:40px;font-size:17.6px;color:#1c1f24;"><span class="l" style="font-size:18.3px;transform:scaleX(0.948);margin-right:-0.58px">Z</span></div>
<div class="t c" style="left:927.5px;top:834.9px;width:37.5px;height:40px;line-height:40px;font-size:17.6px;color:#1c1f24;"><span class="l" style="font-size:18.3px;transform:scaleX(0.912);margin-right:-1.88px">F5</span></div>
<div class="t c" style="left:1392.5px;top:834.9px;width:22.5px;height:40px;line-height:40px;font-size:17.6px;color:#1c1f24;"><span class="l" style="font-size:18.3px;transform:scaleX(0.963);margin-right:-0.19px">.</span></div>
<div class="t c" style="left:965.0px;top:834.9px;width:37.5px;height:40px;line-height:40px;font-size:17.6px;color:#1c1f24;"><span class="l" style="font-size:18.3px;transform:scaleX(0.935);margin-right:-1.52px">1D</span></div>
<div class="t c" style="left:1415.0px;top:834.9px;width:22.5px;height:40px;line-height:40px;font-size:17.6px;color:#1c1f24;"><span class="l" style="font-size:18.3px;transform:scaleX(0.963);margin-right:-0.19px">.</span></div>
<div class="t c" style="left:1002.5px;top:834.9px;width:37.5px;height:40px;line-height:40px;font-size:17.6px;color:#1c1f24;"><span class="l" style="font-size:18.3px;transform:scaleX(0.959);margin-right:-0.83px">61</span></div>
<div class="t c" style="left:1437.5px;top:834.9px;width:22.5px;height:40px;line-height:40px;font-size:17.6px;color:#1c1f24;"><span class="l" style="font-size:18.3px;transform:scaleX(0.972);margin-right:-0.28px">a</span></div>
<div class="t c" style="left:1040.0px;top:834.9px;width:37.5px;height:40px;line-height:40px;font-size:17.6px;color:#1c1f24;"><span class="l" style="font-size:18.3px;transform:scaleX(0.959);margin-right:-0.83px">54</span></div>
<div class="t c" style="left:1460.0px;top:834.9px;width:22.5px;height:40px;line-height:40px;font-size:17.6px;color:#1c1f24;"><span class="l" style="font-size:18.3px;transform:scaleX(0.943);margin-right:-0.64px">T</span></div>
<div class="t c" style="left:1077.5px;top:834.9px;width:37.5px;height:40px;line-height:40px;font-size:17.6px;color:#1c1f24;"><span class="l" style="font-size:18.3px;transform:scaleX(0.898);margin-right:-2.39px">C0</span></div>
<div class="t c" style="left:1482.5px;top:834.9px;width:22.5px;height:40px;line-height:40px;font-size:17.6px;color:#1c1f24;"><span class="l" style="font-size:18.3px;transform:scaleX(0.963);margin-right:-0.19px">.</span></div>
<div class="t c" style="left:391px;top:874.9px;width:114px;height:40px;line-height:40px;font-size:17.6px;color:#1c1f24;"><span class="l" style="font-size:18.3px;transform:scaleX(0.942);margin-right:-4.88px">000000C0</span></div>
<div class="t c" style="left:515.0px;top:874.9px;width:37.5px;height:40px;line-height:40px;font-size:17.6px;color:#1c1f24;"><span class="l" style="font-size:18.3px;transform:scaleX(0.898);margin-right:-2.39px">C4</span></div>
<div class="t c" style="left:1145.0px;top:874.9px;width:22.5px;height:40px;line-height:40px;font-size:17.6px;color:#1c1f24;"><span class="l" style="font-size:18.3px;transform:scaleX(0.963);margin-right:-0.19px">.</span></div>
<div class="t c" style="left:552.5px;top:874.9px;width:37.5px;height:40px;line-height:40px;font-size:17.6px;color:#1c1f24;"><span class="l" style="font-size:18.3px;transform:scaleX(0.849);margin-right:-3.83px">CE</span></div>
<div class="t c" style="left:1167.5px;top:874.9px;width:22.5px;height:40px;line-height:40px;font-size:17.6px;color:#1c1f24;"><span class="l" style="font-size:18.3px;transform:scaleX(0.963);margin-right:-0.19px">.</span></div>
<div class="t c" style="left:590.0px;top:874.9px;width:37.5px;height:40px;line-height:40px;font-size:17.6px;color:#1c1f24;"><span class="l" style="font-size:18.3px;transform:scaleX(0.858);margin-right:-3.45px">CF</span></div>
<div class="t c" style="left:1190.0px;top:874.9px;width:22.5px;height:40px;line-height:40px;font-size:17.6px;color:#1c1f24;"><span class="l" style="font-size:18.3px;transform:scaleX(0.963);margin-right:-0.19px">.</span></div>
<div class="t c" style="left:627.5px;top:874.9px;width:37.5px;height:40px;line-height:40px;font-size:17.6px;color:#1c1f24;"><span class="l" style="font-size:18.3px;transform:scaleX(0.900);margin-right:-2.25px">0E</span></div>
<div class="t c" style="left:1212.5px;top:874.9px;width:22.5px;height:40px;line-height:40px;font-size:17.6px;color:#1c1f24;"><span class="l" style="font-size:18.3px;transform:scaleX(0.963);margin-right:-0.19px">.</span></div>
<div class="t c" style="left:665.0px;top:874.9px;width:37.5px;height:40px;line-height:40px;font-size:17.6px;color:#1c1f24;"><span class="l" style="font-size:18.3px;transform:scaleX(0.898);margin-right:-2.39px">C6</span></div>
<div class="t c" style="left:1235.0px;top:874.9px;width:22.5px;height:40px;line-height:40px;font-size:17.6px;color:#1c1f24;"><span class="l" style="font-size:18.3px;transform:scaleX(0.963);margin-right:-0.19px">.</span></div>
<div class="t c" style="left:702.5px;top:874.9px;width:37.5px;height:40px;line-height:40px;font-size:17.6px;color:#1c1f24;"><span class="l" style="font-size:18.3px;transform:scaleX(0.959);margin-right:-0.83px">48</span></div>
<div class="t c" style="left:1257.5px;top:874.9px;width:22.5px;height:40px;line-height:40px;font-size:17.6px;color:#1c1f24;"><span class="l" style="font-size:18.3px;transform:scaleX(0.969);margin-right:-0.41px">H</span></div>
<div class="t c" style="left:740.0px;top:874.9px;width:37.5px;height:40px;line-height:40px;font-size:17.6px;color:#1c1f24;"><span class="l" style="font-size:18.3px;transform:scaleX(0.959);margin-right:-0.83px">23</span></div>
<div class="t c" style="left:1280.0px;top:874.9px;width:22.5px;height:40px;line-height:40px;font-size:17.6px;color:#1c1f24;"><span class="l" style="font-size:18.3px;transform:scaleX(0.959);margin-right:-0.42px">#</span></div>
<div class="t c" style="left:777.5px;top:874.9px;width:37.5px;height:40px;line-height:40px;font-size:17.6px;color:#1c1f24;"><span class="l" style="font-size:18.3px;transform:scaleX(0.851);margin-right:-3.64px">FC</span></div>
<div class="t c" style="left:1302.5px;top:874.9px;width:22.5px;height:40px;line-height:40px;font-size:17.6px;color:#1c1f24;"><span class="l" style="font-size:18.3px;transform:scaleX(0.963);margin-right:-0.19px">.</span></div>
<div class="t c" style="left:815.0px;top:874.9px;width:37.5px;height:40px;line-height:40px;font-size:17.6px;color:#1c1f24;"><span class="l" style="font-size:18.3px;transform:scaleX(0.959);margin-right:-0.83px">74</span></div>
<div class="t c" style="left:1325.0px;top:874.9px;width:22.5px;height:40px;line-height:40px;font-size:17.6px;color:#1c1f24;"><span class="l" style="font-size:18.3px;transform:scaleX(1.304);margin-right:1.55px">t</span></div>
<div class="t c" style="left:852.5px;top:874.9px;width:37.5px;height:40px;line-height:40px;font-size:17.6px;color:#1c1f24;"><span class="l" style="font-size:18.3px;transform:scaleX(0.863);margin-right:-3.48px">CA</span></div>
<div class="t c" style="left:1347.5px;top:874.9px;width:22.5px;height:40px;line-height:40px;font-size:17.6px;color:#1c1f24;"><span class="l" style="font-size:18.3px;transform:scaleX(0.963);margin-right:-0.19px">.</span></div>
<div class="t c" style="left:890.0px;top:874.9px;width:37.5px;height:40px;line-height:40px;font-size:17.6px;color:#1c1f24;"><span class="l" style="font-size:18.3px;transform:scaleX(0.959);margin-right:-0.83px">52</span></div>
<div class="t c" style="left:1370.0px;top:874.9px;width:22.5px;height:40px;line-height:40px;font-size:17.6px;color:#1c1f24;"><span class="l" style="font-size:18.3px;transform:scaleX(0.846);margin-right:-2.03px">R</span></div>
<div class="t c" style="left:927.5px;top:874.9px;width:37.5px;height:40px;line-height:40px;font-size:17.6px;color:#1c1f24;"><span class="l" style="font-size:18.3px;transform:scaleX(0.959);margin-right:-0.83px">94</span></div>
<div class="t c" style="left:1392.5px;top:874.9px;width:22.5px;height:40px;line-height:40px;font-size:17.6px;color:#1c1f24;"><span class="l" style="font-size:18.3px;transform:scaleX(0.963);margin-right:-0.19px">.</span></div>
<div class="t c" style="left:965.0px;top:874.9px;width:37.5px;height:40px;line-height:40px;font-size:17.6px;color:#1c1f24;"><span class="l" style="font-size:18.3px;transform:scaleX(0.931);margin-right:-1.75px">DB</span></div>
<div class="t c" style="left:1415.0px;top:874.9px;width:22.5px;height:40px;line-height:40px;font-size:17.6px;color:#1c1f24;"><span class="l" style="font-size:18.3px;transform:scaleX(0.963);margin-right:-0.19px">.</span></div>
<div class="t c" style="left:1002.5px;top:874.9px;width:37.5px;height:40px;line-height:40px;font-size:17.6px;color:#1c1f24;"><span class="l" style="font-size:18.3px;transform:scaleX(0.959);margin-right:-0.83px">29</span></div>
<div class="t c" style="left:1437.5px;top:874.9px;width:22.5px;height:40px;line-height:40px;font-size:17.6px;color:#1c1f24;"><span class="l" style="font-size:18.3px;transform:scaleX(0.977);margin-right:-0.14px">)</span></div>
<div class="t c" style="left:1040.0px;top:874.9px;width:37.5px;height:40px;line-height:40px;font-size:17.6px;color:#1c1f24;"><span class="l" style="font-size:18.3px;transform:scaleX(0.959);margin-right:-0.83px">85</span></div>
<div class="t c" style="left:1460.0px;top:874.9px;width:22.5px;height:40px;line-height:40px;font-size:17.6px;color:#1c1f24;"><span class="l" style="font-size:18.3px;transform:scaleX(0.963);margin-right:-0.19px">.</span></div>
<div class="t c" style="left:1077.5px;top:874.9px;width:37.5px;height:40px;line-height:40px;font-size:17.6px;color:#1c1f24;"><span class="l" style="font-size:18.3px;transform:scaleX(0.863);margin-right:-3.48px">CA</span></div>
<div class="t c" style="left:1482.5px;top:874.9px;width:22.5px;height:40px;line-height:40px;font-size:17.6px;color:#1c1f24;"><span class="l" style="font-size:18.3px;transform:scaleX(0.963);margin-right:-0.19px">.</span></div>
</div></div>
<div class="abs" style="left:366px;top:924px;width:1188px;height:1px;background:#d7dde6"></div>
<div class="btn" style="left:1362px;top:944px;width:78px">取 消</div>
<div class="btn pri" style="left:1450px;top:944px;width:79px;font-weight:500">确 定</div>
</div></div>
</body></html>
